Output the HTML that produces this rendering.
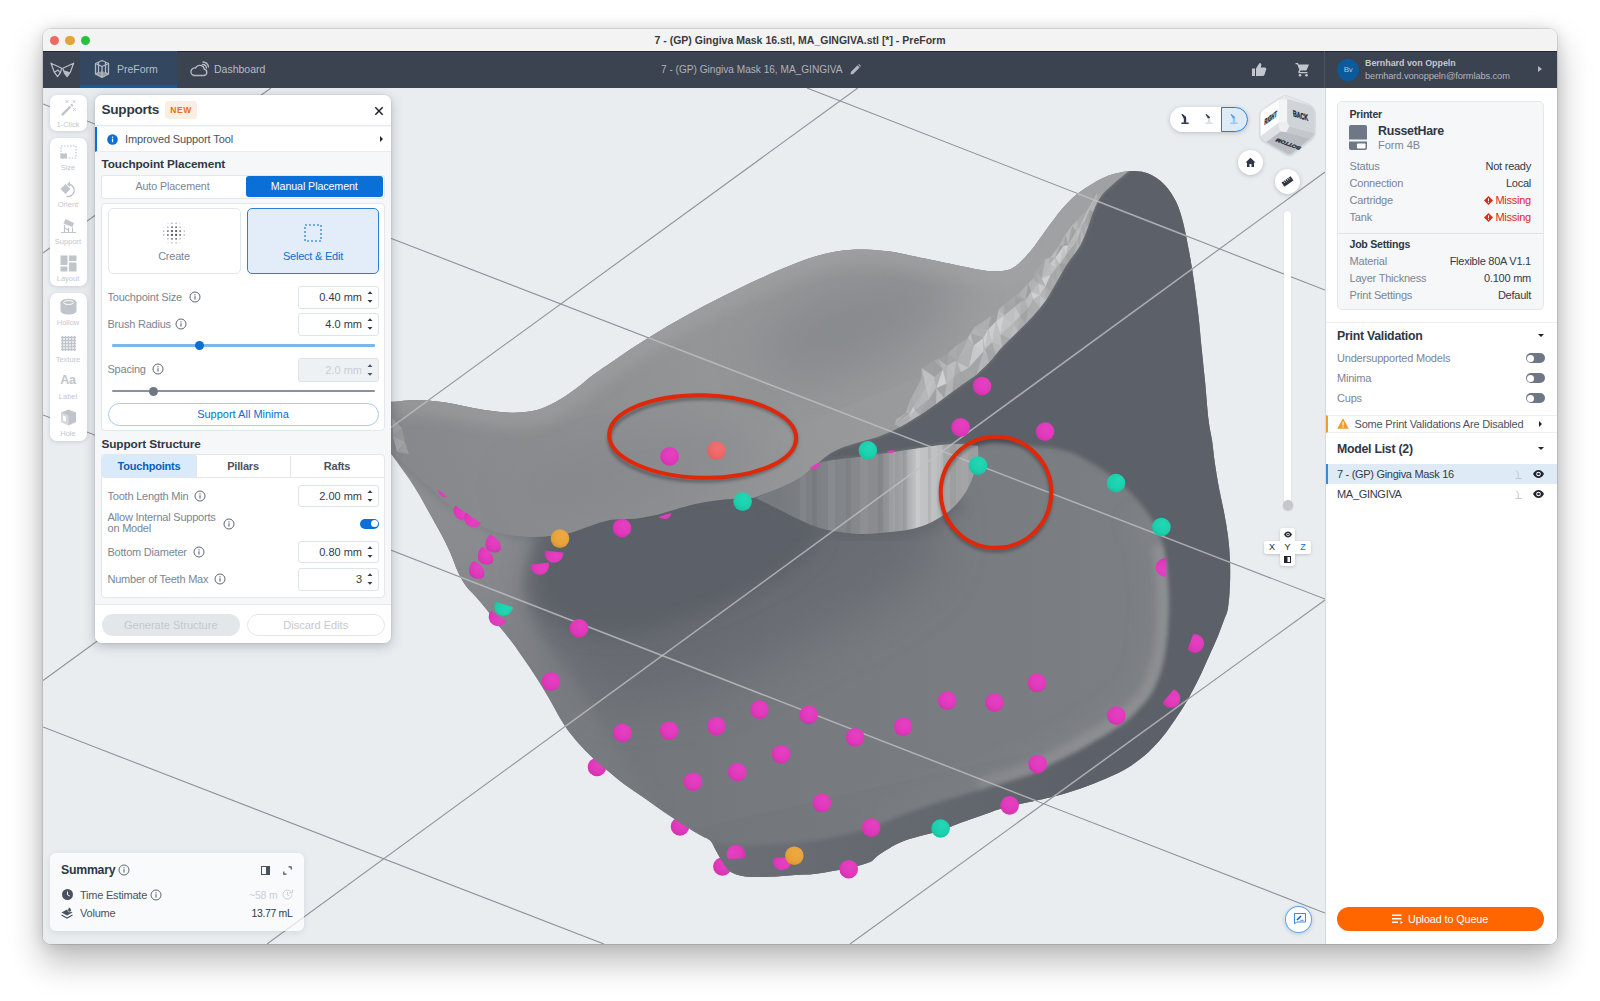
<!DOCTYPE html>
<html lang="en">
<head>
<meta charset="utf-8">
<title>PreForm</title>
<style>
*{box-sizing:border-box;margin:0;padding:0}
html,body{width:1600px;height:1001px;overflow:hidden;background:#fff}
body{font-family:"Liberation Sans",sans-serif;color:#333b49;position:relative;font-size:11px}
.abs{position:absolute}
#win{position:absolute;left:43px;top:29px;width:1514px;height:915px;border-radius:8px;overflow:hidden;background:#e9edf0}
#shadow{position:absolute;left:43px;top:29px;width:1514px;height:915px;border-radius:8px;
 box-shadow:0 0 0 1px rgba(0,0,0,.10),0 17px 32px 2px rgba(0,0,0,.25),0 0 15px rgba(0,0,0,.13)}
#titlebar{position:absolute;left:0;top:0;width:1514px;height:22px;background:#f3f3f4;text-align:center;font-weight:bold;font-size:10.500px;line-height:22px;color:#3a3a3c;letter-spacing:0}
.tl{position:absolute;top:6.500px;width:9.500px;height:9.500px;border-radius:50%}
#toolbar{position:absolute;left:0;top:22px;width:1514px;height:37px;background:#3b4250;box-shadow:inset 0 1px 0 #1f2838}
#viewport{position:absolute;left:0;top:59px;width:1282px;height:856px;background:#e9edf0;overflow:hidden}
#rpanel{position:absolute;left:1282px;top:59px;width:232px;height:856px;background:#fff;border-left:1px solid #d5dae0;overflow:hidden}
#toolbar .tab{position:absolute;top:0;height:37px;color:#b9bec7;font-size:11px;line-height:37px}
#toolbar svg{position:absolute}
.tbtxt{position:absolute;color:#b4b9c2;font-size:11px;white-space:nowrap}

#vp{position:absolute;left:-43px;top:-88px;width:1600px;height:1001px}
.tbox{position:absolute;left:49.500px;width:37px;background:#fff;border-radius:7px;box-shadow:0 1px 4px rgba(60,70,90,.18)}
.tl7{position:absolute;left:49.500px;width:37px;text-align:center;font-size:7.500px;color:#c3c8cf;line-height:9px}
#sp{position:absolute;left:95px;top:95px;width:296px;height:548px;background:#f5f7f9;border-radius:7px;box-shadow:0 3px 12px rgba(40,50,70,.28),0 0 2px rgba(40,50,70,.2);overflow:hidden}
.lab{font-size:11px;color:#7b8594;line-height:14px;white-space:nowrap;height:14px;letter-spacing:-.22px}
.inp{border:1px solid #dfe4e9;border-radius:3px}
.h12{position:absolute;font-weight:bold;font-size:11.800px;letter-spacing:-.1px;color:#2f3744;white-space:nowrap;line-height:14px}
.card{position:absolute;background:#fff;border:1px solid #e3e7eb;border-radius:4px}

#rp{position:absolute;left:-1326px;top:-88px;width:1600px;height:1001px}
.rl{position:absolute;left:1349.500px;font-size:11px;color:#7b8594;line-height:14px;white-space:nowrap;letter-spacing:-.2px}
.rv{position:absolute;right:69px;font-size:11px;color:#333b49;line-height:14px;white-space:nowrap;text-align:right;letter-spacing:-.25px}
.rh{position:absolute;letter-spacing:-.25px;font-weight:bold;color:#2f3744;white-space:nowrap;line-height:14px}
.tg{position:absolute;left:1525.500px;width:19px;height:10px;border-radius:5px;background:#6d7785}
.tg:after{content:"";position:absolute;left:1.500px;top:1.500px;width:7px;height:7px;border-radius:50%;background:#fff}

.cbtn{position:absolute;width:25px;height:25px;border-radius:50%;background:#fff;box-shadow:0 1px 4px rgba(40,50,70,.25)}

</style>
</head>
<body>
<div id="shadow"></div>
<div id="win">
 <div id="titlebar">7 - (GP) Gingiva Mask 16.stl, MA_GINGIVA.stl [*] - PreForm
  <div class="tl" style="left:6.500px;background:#ee6a5f"></div>
  <div class="tl" style="left:22px;background:#e6a23c"></div>
  <div class="tl" style="left:37.500px;background:#27c13f"></div>
 </div>
 <div id="toolbar">
  <svg style="left:7px;top:10px" width="25" height="18" viewBox="0 0 25 18"><g fill="none" stroke="#b9bdc4" stroke-width="1.250" stroke-linejoin="round"><path d="M1 2.200 L11.800 7.200 L10.200 12 L7.500 15.600 L4.300 11.200 Z"/><path d="M4.300 11.200 L8 9 L10.200 12"/><path d="M23.600 2.200 L12.800 7.200 L14.400 12 L17.100 15.600 L20.300 11.200 Z"/></g><path d="M13.600 9.200 L20 11.300 L17.100 15.600 L14.400 12 Z" fill="#b9bdc4"/></svg>
  <div class="tab" style="left:37px;width:97px;background:#334760;border-bottom:3px solid #0b5fa8"></div>
  <svg style="left:51px;top:8px" width="16" height="20" viewBox="0 0 16 20"><g fill="none" stroke="#b3b7be" stroke-width="1.3" stroke-linejoin="round"><path d="M8 1.500 L14.500 4.500 V15 L8 18.500 L1.500 15 V4.500 Z"/><path d="M1.500 4.500 L8 7.500 L14.500 4.500 M8 7.500 V18.500"/><path d="M4.500 3.200 V13.500 L1.500 15 M11.500 3.200 V13.500 L14.500 15"/></g><path d="M4.500 13.500 L8 12 L11.500 13.500 L14.500 15 L8 18.500 L1.500 15 Z" fill="#b3b7be" opacity=".75"/></svg>
  <div class="tbtxt" style="left:74px;top:0;line-height:37px;color:#b8bdc6;font-size:10.500px">PreForm</div>
  <svg style="left:146px;top:10px" width="20" height="16" viewBox="0 0 20 16"><g fill="none" stroke="#b3b7be" stroke-width="1.400" stroke-linecap="round" stroke-linejoin="round"><path d="M5 14.500 H15 A3.200 3.200 0 0 0 15.300 8.200 A4.600 4.600 0 0 0 6.600 7 A3.800 3.800 0 0 0 5 14.500 Z"/><path d="M13.500 3.500 A4 4 0 0 1 17.500 7"/><path d="M14 1 A6 6 0 0 1 19.500 6"/></g></svg>
  <div class="tbtxt" style="left:171px;top:0;line-height:37px;color:#b8bdc6;font-size:10.500px">Dashboard</div>
  <div class="tbtxt" style="left:618px;top:0;line-height:37px;font-size:10.100px;color:#aeb3bc">7 - (GP) Gingiva Mask 16, MA_GINGIVA</div>
  <svg style="left:807px;top:13px" width="11" height="11" viewBox="0 0 11 11"><path d="M0.500 10.500 L1 7.800 L7.500 1.300 L9.700 3.500 L3.200 10 Z M8.200 0.700 L9 0 L11 2 L10.300 2.800 Z" fill="#b3b7be"/></svg>
  <svg style="left:1208px;top:11px" width="16" height="15" viewBox="0 0 16 15"><path d="M1 6.500 H4 V14 H1 Z M5 14 V6.500 L8.500 1 C10 1 10.600 2 10.300 3.300 L9.700 5.500 H13.800 C15 5.500 15.500 6.500 15.200 7.500 L13.500 12.800 C13.200 13.600 12.600 14 11.800 14 Z" fill="#c2c6cd"/></svg>
  <svg style="left:1252px;top:11px" width="15" height="15" viewBox="0 0 15 15"><path d="M0.500 1 H3 L3.700 2.500 H14 L11.800 7.800 C11.600 8.300 11.200 8.500 10.700 8.500 H5.500 L4.800 10 H12.500 V11.300 H4.500 C3.500 11.300 3 10.300 3.400 9.500 L4.300 7.800 L2.200 2.300 H0.500 Z" fill="#c2c6cd"/><circle cx="5" cy="13.200" r="1.300" fill="#c2c6cd"/><circle cx="11.500" cy="13.200" r="1.300" fill="#c2c6cd"/></svg>
  <div class="abs" style="left:1281px;top:0;width:1px;height:37px;background:#4a5160"></div>
  <div class="abs" style="left:1294px;top:8px;width:22px;height:22px;border-radius:50%;background:#0b5a9c;color:#9fc3e4;font-size:8px;text-align:center;line-height:22px;letter-spacing:-.3px">Bv</div>
  <div class="tbtxt" style="left:1322px;top:7px;font-weight:bold;font-size:8.900px;color:#c3c7ce">Bernhard von Oppeln</div>
  <div class="tbtxt" style="left:1322px;top:20px;font-size:9.300px;color:#b0b5be;letter-spacing:-.1px">bernhard.vonoppeln@formlabs.com</div>
  <div class="abs" style="left:1495px;top:15px;width:0;height:0;border-left:4px solid #b3b7be;border-top:3.500px solid transparent;border-bottom:3.500px solid transparent"></div>
</div>
 <div id="viewport"><div id="vp">
<svg class="abs" style="left:0;top:0" width="1600" height="1001" viewBox="0 0 1600 1001">
<defs>
<clipPath id="silc"><path d="M380.0 401.0 C382.0 394.6 385.6 402.0 392.0 401.8 C398.4 401.6 409.3 399.8 418.5 400.0 C427.7 400.2 437.5 401.4 447.0 402.8 C456.5 404.2 465.9 406.9 475.4 408.5 C484.9 410.1 496.0 411.7 503.9 412.3 C511.8 412.9 516.5 412.9 522.8 412.3 C529.1 411.7 535.5 410.7 541.8 408.5 C548.1 406.3 554.5 402.8 560.8 399.0 C567.1 395.2 574.4 389.7 579.8 385.7 C585.2 381.7 587.6 378.9 593.0 375.0 C598.4 371.1 605.8 366.2 612.0 362.0 C618.2 357.8 623.8 353.6 630.0 349.5 C636.2 345.4 642.8 341.3 649.0 337.5 C655.2 333.7 660.9 330.1 667.0 326.5 C673.1 322.9 679.4 319.4 685.6 316.0 C691.8 312.6 697.8 309.2 704.0 306.0 C710.2 302.8 716.4 299.6 722.6 296.5 C728.8 293.4 734.9 290.4 741.0 287.5 C747.1 284.6 753.3 281.6 759.5 278.8 C765.7 276.0 771.8 273.1 778.0 270.5 C784.2 267.9 790.3 265.3 796.5 263.0 C802.7 260.7 808.8 258.3 815.0 256.5 C821.2 254.7 827.3 253.1 833.5 252.0 C839.7 250.9 845.9 250.2 852.0 249.8 C858.1 249.4 863.7 249.5 870.0 249.8 C876.3 250.1 883.3 250.7 890.0 251.6 C896.7 252.5 903.0 254.1 910.0 255.5 C917.0 256.9 924.0 258.4 932.0 260.0 C940.0 261.6 949.3 263.7 958.0 265.4 C966.7 267.1 976.7 269.5 984.0 270.4 C991.3 271.3 996.8 271.6 1002.0 271.0 C1007.2 270.4 1010.2 269.8 1015.0 266.5 C1019.8 263.2 1025.4 257.1 1030.6 251.0 C1035.8 244.9 1040.8 237.0 1046.0 230.0 C1051.2 223.0 1056.8 215.0 1062.0 209.0 C1067.2 203.0 1072.2 198.1 1077.4 193.8 C1082.6 189.5 1087.8 186.4 1093.0 183.4 C1098.2 180.4 1103.4 177.6 1108.6 175.6 C1113.8 173.6 1119.7 172.5 1124.0 171.7 C1128.3 170.9 1131.0 170.9 1134.5 171.0 C1138.0 171.1 1141.6 171.5 1145.0 172.5 C1148.4 173.5 1151.5 174.8 1155.0 177.0 C1158.5 179.2 1162.2 181.9 1165.7 186.0 C1169.2 190.1 1173.1 195.6 1176.0 201.6 C1178.9 207.6 1180.8 213.3 1183.0 222.0 C1185.2 230.7 1187.6 243.1 1189.5 253.5 C1191.4 263.9 1193.0 274.3 1194.5 284.7 C1196.0 295.1 1197.3 305.6 1198.5 316.0 C1199.7 326.4 1200.4 336.2 1201.5 347.0 C1202.6 357.8 1203.8 368.6 1205.0 380.8 C1206.2 393.0 1207.4 410.1 1208.6 420.0 C1209.8 429.9 1210.9 432.7 1212.0 440.0 C1213.1 447.3 1213.8 456.0 1215.0 464.0 C1216.2 472.0 1217.5 480.0 1219.0 488.0 C1220.5 496.0 1222.5 504.0 1224.0 512.0 C1225.5 520.0 1227.0 528.0 1228.0 536.0 C1229.0 544.0 1229.7 552.0 1230.0 560.0 C1230.3 568.0 1230.3 576.0 1230.0 584.0 C1229.7 592.0 1229.0 602.0 1228.0 608.0 C1227.0 614.0 1225.7 615.3 1224.0 620.0 C1222.3 624.7 1220.3 630.3 1218.0 636.0 C1215.7 641.7 1212.7 648.0 1210.0 654.0 C1207.3 660.0 1204.7 666.3 1202.0 672.0 C1199.3 677.7 1197.0 682.3 1194.0 688.0 C1191.0 693.7 1187.7 700.0 1184.0 706.0 C1180.3 712.0 1176.0 718.3 1172.0 724.0 C1168.0 729.7 1164.7 734.7 1160.0 740.0 C1155.3 745.3 1150.0 751.0 1144.0 756.0 C1138.0 761.0 1131.3 765.8 1124.0 770.0 C1116.7 774.2 1108.0 777.7 1100.0 781.0 C1092.0 784.3 1084.3 787.2 1076.0 790.0 C1067.7 792.8 1059.3 795.2 1050.0 797.5 C1040.7 799.8 1028.3 802.1 1020.0 804.0 C1011.7 805.9 1006.7 807.0 1000.0 809.0 C993.3 811.0 986.7 813.7 980.0 816.0 C973.3 818.3 966.7 820.5 960.0 823.0 C953.3 825.5 946.7 828.8 940.0 831.0 C933.3 833.2 926.7 834.1 920.0 836.0 C913.3 837.9 906.7 839.5 900.0 842.5 C893.3 845.5 885.0 850.8 880.0 854.0 C875.0 857.2 874.8 859.8 870.0 862.0 C865.2 864.2 857.2 866.0 851.0 867.5 C844.8 869.0 838.7 869.9 832.5 871.0 C826.3 872.1 820.0 873.3 813.8 874.0 C807.5 874.7 801.3 874.6 795.0 875.0 C788.7 875.4 782.2 876.2 776.0 876.5 C769.8 876.8 763.1 877.1 757.5 877.0 C751.9 876.9 746.9 876.8 742.5 876.0 C738.1 875.2 734.1 874.0 731.0 872.0 C727.9 870.0 726.3 867.4 723.8 863.8 C721.3 860.2 718.2 854.4 716.0 850.6 C713.8 846.8 713.1 843.5 710.6 841.0 C708.1 838.5 705.7 838.4 701.0 835.6 C696.3 832.8 688.7 828.3 682.5 824.4 C676.3 820.5 670.0 816.3 663.8 812.0 C657.5 807.7 651.3 802.9 645.0 798.5 C638.7 794.1 632.2 790.1 626.0 785.5 C619.8 780.9 613.3 775.4 608.0 771.0 C602.7 766.6 598.3 763.0 594.0 759.0 C589.7 755.0 586.0 751.3 582.0 747.0 C578.0 742.7 573.7 737.8 570.0 733.0 C566.3 728.2 563.3 723.5 560.0 718.0 C556.7 712.5 553.7 706.3 550.0 700.0 C546.3 693.7 542.0 686.3 538.0 680.0 C534.0 673.7 530.3 668.3 526.0 662.0 C521.7 655.7 516.5 648.0 512.0 642.0 C507.5 636.0 503.2 631.3 499.0 626.0 C494.8 620.7 490.7 614.7 487.0 610.0 C483.3 605.3 480.5 602.0 477.0 598.0 C473.5 594.0 469.2 590.3 466.0 586.0 C462.8 581.7 460.7 577.7 458.0 572.0 C455.3 566.3 453.0 558.7 450.0 552.0 C447.0 545.3 443.3 538.3 440.0 532.0 C436.7 525.7 433.3 520.0 430.0 514.0 C426.7 508.0 423.3 501.7 420.0 496.0 C416.7 490.3 413.3 485.0 410.0 480.0 C406.7 475.0 403.0 470.2 400.0 466.0 C397.0 461.8 395.3 459.3 392.0 455.0 C388.7 450.7 382.0 449.0 380.0 440.0 C378.0 431.0 378.0 407.4 380.0 401.0 Z"/></clipPath>
<clipPath id="surfc"><path d="M380 300 L1129 100 L1129 171C1126.5 173.1 1118.5 179.2 1113.8 183.4 C1109.1 187.6 1104.3 191.6 1100.8 196.4 C1097.3 201.2 1095.2 206.8 1093.0 212.0 C1090.8 217.2 1090.0 221.9 1087.8 227.5 C1085.6 233.1 1083.5 239.6 1080.0 245.7 C1076.5 251.8 1070.9 257.9 1067.0 264.0 C1063.1 270.1 1060.1 276.0 1056.6 282.0 C1053.1 288.0 1049.9 294.3 1046.0 300.0 C1042.1 305.7 1037.7 310.8 1033.0 316.0 C1028.3 321.2 1022.9 326.2 1017.7 331.4 C1012.5 336.6 1006.8 341.8 1002.0 347.0 C997.2 352.2 993.3 357.9 989.0 362.6 C984.7 367.3 979.5 372.0 976.0 375.0 C972.5 378.0 972.0 377.7 968.0 380.5 C964.0 383.3 957.3 388.1 952.0 392.0 C946.7 395.9 941.3 400.2 936.0 404.0 C930.7 407.8 926.0 411.2 920.0 415.0 C914.0 418.8 906.7 423.5 900.0 427.0 C893.3 430.5 886.7 433.5 880.0 436.0 C873.3 438.5 866.7 439.9 860.0 442.0 C853.3 444.1 845.3 446.3 840.0 448.5 C834.7 450.7 831.3 452.8 828.0 455.0 C824.7 457.2 822.7 459.3 820.0 461.5 C817.3 463.7 815.3 465.2 812.0 468.0 C808.7 470.8 805.3 474.7 800.0 478.0 C794.7 481.3 786.0 485.3 780.0 488.0 C774.0 490.7 768.7 492.3 764.0 494.0 C759.3 495.7 757.3 497.2 752.0 498.0 C746.7 498.8 737.3 498.7 732.0 499.0 C726.7 499.3 725.3 499.3 720.0 500.0 C714.7 500.7 706.7 501.7 700.0 503.0 C693.3 504.3 686.7 506.2 680.0 508.0 C673.3 509.8 666.7 512.3 660.0 514.0 C653.3 515.7 645.0 517.2 640.0 518.0 C635.0 518.8 635.0 518.7 630.0 519.0 C625.0 519.3 616.7 518.8 610.0 520.0 C603.3 521.2 596.7 523.8 590.0 526.0 C583.3 528.2 576.7 531.3 570.0 533.0 C563.3 534.7 556.7 535.3 550.0 536.0 C543.3 536.7 536.7 537.2 530.0 537.0 C523.3 536.8 516.7 536.2 510.0 535.0 C503.3 533.8 496.7 532.5 490.0 530.0 C483.3 527.5 476.7 524.0 470.0 520.0 C463.3 516.0 456.7 511.3 450.0 506.0 C443.3 500.7 436.7 494.0 430.0 488.0 C423.3 482.0 416.3 475.8 410.0 470.0 C403.7 464.2 397.0 457.7 392.0 453.0 C387.0 448.3 382.0 443.8 380.0 442.0 Z"/></clipPath>
<filter id="b2" x="-10%" y="-10%" width="120%" height="120%"><feGaussianBlur stdDeviation="2"/></filter>
<filter id="b3" x="-10%" y="-10%" width="120%" height="120%"><feGaussianBlur stdDeviation="3"/></filter>
<filter id="b6" x="-20%" y="-20%" width="140%" height="140%"><feGaussianBlur stdDeviation="6"/></filter>
<filter id="b10" x="-20%" y="-20%" width="140%" height="140%"><feGaussianBlur stdDeviation="10"/></filter>
<filter id="b25" x="-30%" y="-30%" width="160%" height="160%"><feGaussianBlur stdDeviation="25"/></filter>
<filter id="es" x="-10%" y="-10%" width="120%" height="130%"><feGaussianBlur stdDeviation="1.500"/></filter>
<radialGradient id="gM" cx=".6" cy=".35" r=".75"><stop offset="0" stop-color="#e640c2"/><stop offset=".6" stop-color="#e038ba"/><stop offset="1" stop-color="#cf2fac"/></radialGradient>
<radialGradient id="gT" cx=".6" cy=".35" r=".75"><stop offset="0" stop-color="#22d8b6"/><stop offset=".6" stop-color="#1ccfad"/><stop offset="1" stop-color="#14bd9d"/></radialGradient>
<radialGradient id="gO" cx=".6" cy=".35" r=".75"><stop offset="0" stop-color="#eeaa40"/><stop offset=".6" stop-color="#e8a23a"/><stop offset="1" stop-color="#d99030"/></radialGradient>
<radialGradient id="gS" cx=".6" cy=".35" r=".75"><stop offset="0" stop-color="#f27070"/><stop offset=".6" stop-color="#ec6868"/><stop offset="1" stop-color="#dd5c5c"/></radialGradient>
<linearGradient id="gsurf" x1="400" y1="500" x2="1050" y2="250" gradientUnits="userSpaceOnUse"><stop offset="0" stop-color="#85878a"/><stop offset=".45" stop-color="#929496"/><stop offset="1" stop-color="#a0a1a3"/></linearGradient>
<linearGradient id="gcyl" x1="780" y1="0" x2="980" y2="0" gradientUnits="userSpaceOnUse"><stop offset="0" stop-color="#777a7f"/><stop offset=".25" stop-color="#808387"/><stop offset=".5" stop-color="#8b8d90"/><stop offset=".62" stop-color="#a2a3a6"/><stop offset=".68" stop-color="#c2c3c5"/><stop offset=".78" stop-color="#bfc0c2"/><stop offset=".82" stop-color="#a6a7a9"/><stop offset="1" stop-color="#9a9c9e"/></linearGradient>
<linearGradient id="gfade" x1="700" y1="0" x2="1080" y2="0" gradientUnits="userSpaceOnUse"><stop offset="0" stop-color="#72767b" stop-opacity=".75"/><stop offset=".35" stop-color="#72767b" stop-opacity=".45"/><stop offset=".75" stop-color="#72767b" stop-opacity=".25"/><stop offset="1" stop-color="#72767b" stop-opacity="0"/></linearGradient>
<linearGradient id="gwall" x1="0" y1="450" x2="0" y2="800" gradientUnits="userSpaceOnUse"><stop offset="0" stop-color="#8e9093"/><stop offset=".4" stop-color="#86888c"/><stop offset=".7" stop-color="#7a7d82"/><stop offset="1" stop-color="#75787d"/></linearGradient>
<linearGradient id="gfloor" x1="600" y1="0" x2="1150" y2="0" gradientUnits="userSpaceOnUse"><stop offset="0" stop-color="#72767b"/><stop offset=".4" stop-color="#777a7f"/><stop offset="1" stop-color="#7b7e82"/></linearGradient>
</defs>
<g><line x1="43" y1="104" x2="1325" y2="599" stroke="#8f9398" stroke-width="1.1" opacity="1"/><line x1="43" y1="727" x2="604" y2="944" stroke="#8f9398" stroke-width="1.1" opacity="1"/><line x1="807" y1="88" x2="1325" y2="290" stroke="#8f9398" stroke-width="1.1" opacity="1"/><line x1="43" y1="415" x2="1325" y2="913" stroke="#8f9398" stroke-width="1.1" opacity="1"/><line x1="271" y1="88" x2="43" y2="253" stroke="#8f9398" stroke-width="1.1" opacity="1"/><line x1="857.8" y1="88" x2="43" y2="680.5" stroke="#8f9398" stroke-width="1.1" opacity="1"/><line x1="1325" y1="172" x2="267" y2="944" stroke="#8f9398" stroke-width="1.1" opacity="1"/><line x1="1325" y1="600" x2="850" y2="944" stroke="#8f9398" stroke-width="1.1" opacity="1"/></g>
<circle cx="597" cy="767" r="9.300" fill="url(#gM)"/><circle cx="680" cy="826.5" r="9.300" fill="url(#gM)"/><circle cx="722.4" cy="866.5" r="9.300" fill="url(#gM)"/>
<g clip-path="url(#silc)">
<rect x="380" y="150" width="880" height="760" fill="url(#gfloor)"/>
<path d="M380 435 L392 453 L430 488 L470 520 L510 535 L536 538 L528 560 L522 584 L528 610 L544 640 L564 665 L580 690 L596 715 L610 742 L630 770 L665 808 L640 830 L560 740 L470 620 L380 470 Z" fill="url(#gwall)" filter="url(#b6)"/>
<path d="M546 520 L534 562 L530 592 L540 625 L566 660 L612 700 L700 690 L790 650 L870 610 L930 570 L940 520 L880 480 L800 440 Z" fill="#5c6168" opacity=".5" filter="url(#b25)"/>
<path d="M548 520 L538 560 L534 590 L546 614 L584 634 L640 634 L700 616 L750 594 L790 572 L815 548 L822 530 L800 505 L760 480 L640 500 Z" fill="#5b6067" filter="url(#b10)"/>
<g filter="url(#b6)"><path d="M960.0 500.0 C958.0 502.0 952.7 508.3 948.0 512.0 C943.3 515.7 937.3 519.3 932.0 522.0 C926.7 524.7 921.3 526.5 916.0 528.0 C910.7 529.5 906.0 530.2 900.0 531.0 C894.0 531.8 886.7 532.5 880.0 533.0 C873.3 533.5 866.7 534.2 860.0 534.0 C853.3 533.8 846.7 533.0 840.0 532.0 C833.3 531.0 826.7 530.0 820.0 528.0 C813.3 526.0 806.7 523.0 800.0 520.0 C793.3 517.0 785.3 512.7 780.0 510.0 C774.7 507.3 770.0 505.0 768.0 504.0" fill="none" stroke="#5b6067" stroke-width="16" opacity=".55"/></g>
<g filter="url(#b10)"><path d="M1144.0 508.0 C1146.0 511.0 1152.8 520.0 1156.0 526.0 C1159.2 532.0 1161.3 538.3 1163.0 544.0 C1164.7 549.7 1165.2 554.0 1166.0 560.0 C1166.8 566.0 1167.5 573.3 1168.0 580.0 C1168.5 586.7 1168.9 593.3 1169.0 600.0 C1169.1 606.7 1168.8 613.3 1168.5 620.0 C1168.2 626.7 1167.8 633.3 1167.0 640.0 C1166.2 646.7 1165.5 653.3 1164.0 660.0 C1162.5 666.7 1160.3 674.0 1158.0 680.0 C1155.7 686.0 1153.0 691.3 1150.0 696.0 C1147.0 700.7 1143.7 704.0 1140.0 708.0 C1136.3 712.0 1132.7 716.2 1128.0 720.0 C1123.3 723.8 1117.3 727.6 1112.0 731.0 C1106.7 734.4 1102.0 737.0 1096.0 740.5 C1090.0 744.0 1082.7 748.4 1076.0 752.0 C1069.3 755.6 1062.7 758.7 1056.0 762.0 C1049.3 765.3 1042.0 769.3 1036.0 772.0 C1030.0 774.7 1029.3 775.0 1020.0 778.0 C1010.7 781.0 993.3 786.0 980.0 790.0 C966.7 794.0 953.3 797.7 940.0 802.0 C926.7 806.3 911.7 811.7 900.0 816.0 C888.3 820.3 875.0 826.0 870.0 828.0" fill="none" stroke="#96989b" stroke-width="46" opacity=".14"/></g>
<g filter="url(#b3)"><path d="M1163.0 544.0 C1163.5 546.7 1165.2 554.0 1166.0 560.0 C1166.8 566.0 1167.5 573.3 1168.0 580.0 C1168.5 586.7 1168.9 593.3 1169.0 600.0 C1169.1 606.7 1168.8 613.3 1168.5 620.0 C1168.2 626.7 1167.8 633.3 1167.0 640.0 C1166.2 646.7 1165.5 653.3 1164.0 660.0 C1162.5 666.7 1160.3 674.0 1158.0 680.0 C1155.7 686.0 1153.0 691.3 1150.0 696.0 C1147.0 700.7 1143.7 704.0 1140.0 708.0 C1136.3 712.0 1132.7 716.2 1128.0 720.0 C1123.3 723.8 1117.3 727.6 1112.0 731.0 C1106.7 734.4 1102.0 737.0 1096.0 740.5 C1090.0 744.0 1082.7 748.4 1076.0 752.0 C1069.3 755.6 1062.7 758.7 1056.0 762.0 C1049.3 765.3 1042.0 769.3 1036.0 772.0 C1030.0 774.7 1029.3 775.0 1020.0 778.0 C1010.7 781.0 986.7 788.0 980.0 790.0" fill="none" stroke="#9a9c9e" stroke-width="24" opacity=".5"/></g>
<path d="M1129.0 171.0 C1126.5 173.1 1118.5 179.2 1113.8 183.4 C1109.1 187.6 1104.3 191.6 1100.8 196.4 C1097.3 201.2 1095.2 206.8 1093.0 212.0 C1090.8 217.2 1090.0 221.9 1087.8 227.5 C1085.6 233.1 1083.5 239.6 1080.0 245.7 C1076.5 251.8 1070.9 257.9 1067.0 264.0 C1063.1 270.1 1060.1 276.0 1056.6 282.0 C1053.1 288.0 1049.9 294.3 1046.0 300.0 C1042.1 305.7 1037.7 310.8 1033.0 316.0 C1028.3 321.2 1022.9 326.2 1017.7 331.4 C1012.5 336.6 1006.8 341.8 1002.0 347.0 C997.2 352.2 993.3 357.9 989.0 362.6 C984.7 367.3 979.5 372.0 976.0 375.0 C972.5 378.0 972.0 377.7 968.0 380.5 C964.0 383.3 957.3 388.1 952.0 392.0 C946.7 395.9 941.3 400.2 936.0 404.0 C930.7 407.8 926.0 411.2 920.0 415.0 C914.0 418.8 906.7 423.5 900.0 427.0 C893.3 430.5 886.7 433.5 880.0 436.0 C873.3 438.5 866.7 439.9 860.0 442.0 C853.3 444.1 845.3 446.3 840.0 448.5 C834.7 450.7 831.3 452.8 828.0 455.0 C824.7 457.2 818.0 460.8 820.0 461.5 C822.0 462.2 833.3 459.8 840.0 459.0 C846.7 458.2 853.3 457.8 860.0 457.0 C866.7 456.2 873.3 455.0 880.0 454.0 C886.7 453.0 893.3 452.0 900.0 451.0 C906.7 450.0 913.3 449.0 920.0 448.0 C926.7 447.0 933.3 445.7 940.0 445.0 C946.7 444.3 953.7 443.8 960.0 444.0 C966.3 444.2 973.3 446.0 978.0 446.0 C982.7 446.0 984.3 444.3 988.0 444.0 C991.7 443.7 994.7 443.8 1000.0 444.0 C1005.3 444.2 1013.3 444.5 1020.0 445.0 C1026.7 445.5 1035.0 446.6 1040.0 447.0 C1045.0 447.4 1045.0 446.7 1050.0 447.5 C1055.0 448.3 1063.3 449.6 1070.0 452.0 C1076.7 454.4 1083.3 458.2 1090.0 462.0 C1096.7 465.8 1103.3 470.0 1110.0 475.0 C1116.7 480.0 1124.3 486.5 1130.0 492.0 C1135.7 497.5 1139.7 502.3 1144.0 508.0 C1148.3 513.7 1152.8 520.0 1156.0 526.0 C1159.2 532.0 1161.3 538.3 1163.0 544.0 C1164.7 549.7 1165.2 554.0 1166.0 560.0 C1166.8 566.0 1167.5 573.3 1168.0 580.0 C1168.5 586.7 1168.9 593.3 1169.0 600.0 C1169.1 606.7 1168.8 613.3 1168.5 620.0 C1168.2 626.7 1167.8 633.3 1167.0 640.0 C1166.2 646.7 1165.5 653.3 1164.0 660.0 C1162.5 666.7 1160.3 674.0 1158.0 680.0 C1155.7 686.0 1153.0 691.3 1150.0 696.0 C1147.0 700.7 1143.7 704.0 1140.0 708.0 C1136.3 712.0 1132.7 716.2 1128.0 720.0 C1123.3 723.8 1117.3 727.6 1112.0 731.0 C1106.7 734.4 1102.0 737.0 1096.0 740.5 C1090.0 744.0 1082.7 748.4 1076.0 752.0 C1069.3 755.6 1062.7 758.7 1056.0 762.0 C1049.3 765.3 1042.0 769.3 1036.0 772.0 C1030.0 774.7 1029.3 775.0 1020.0 778.0 C1010.7 781.0 993.3 786.0 980.0 790.0 C966.7 794.0 953.3 797.7 940.0 802.0 C926.7 806.3 911.7 811.7 900.0 816.0 C888.3 820.3 880.0 824.7 870.0 828.0 C860.0 831.3 849.3 833.8 840.0 836.0 C830.7 838.2 822.3 839.8 814.0 841.0 C805.7 842.2 799.4 842.8 790.0 843.5 C780.6 844.2 766.8 845.1 757.6 845.5 C748.4 845.9 742.6 846.6 735.0 846.0 C727.4 845.4 715.8 842.7 712.0 842.0 L700 846 L715 885 L725 900 L1300 900 L1300 100 L1129 100 Z" fill="#5b6068" filter="url(#b2)"/>
<path d="M690 830 L1080 740 L1080 900 L690 900 Z" fill="url(#gfade)"/>
<path d="M380 300 L1129 100 L1129 171C1126.5 173.1 1118.5 179.2 1113.8 183.4 C1109.1 187.6 1104.3 191.6 1100.8 196.4 C1097.3 201.2 1095.2 206.8 1093.0 212.0 C1090.8 217.2 1090.0 221.9 1087.8 227.5 C1085.6 233.1 1083.5 239.6 1080.0 245.7 C1076.5 251.8 1070.9 257.9 1067.0 264.0 C1063.1 270.1 1060.1 276.0 1056.6 282.0 C1053.1 288.0 1049.9 294.3 1046.0 300.0 C1042.1 305.7 1037.7 310.8 1033.0 316.0 C1028.3 321.2 1022.9 326.2 1017.7 331.4 C1012.5 336.6 1006.8 341.8 1002.0 347.0 C997.2 352.2 993.3 357.9 989.0 362.6 C984.7 367.3 979.5 372.0 976.0 375.0 C972.5 378.0 972.0 377.7 968.0 380.5 C964.0 383.3 957.3 388.1 952.0 392.0 C946.7 395.9 941.3 400.2 936.0 404.0 C930.7 407.8 926.0 411.2 920.0 415.0 C914.0 418.8 906.7 423.5 900.0 427.0 C893.3 430.5 886.7 433.5 880.0 436.0 C873.3 438.5 866.7 439.9 860.0 442.0 C853.3 444.1 845.3 446.3 840.0 448.5 C834.7 450.7 831.3 452.8 828.0 455.0 C824.7 457.2 822.7 459.3 820.0 461.5 C817.3 463.7 815.3 465.2 812.0 468.0 C808.7 470.8 805.3 474.7 800.0 478.0 C794.7 481.3 786.0 485.3 780.0 488.0 C774.0 490.7 768.7 492.3 764.0 494.0 C759.3 495.7 757.3 497.2 752.0 498.0 C746.7 498.8 737.3 498.7 732.0 499.0 C726.7 499.3 725.3 499.3 720.0 500.0 C714.7 500.7 706.7 501.7 700.0 503.0 C693.3 504.3 686.7 506.2 680.0 508.0 C673.3 509.8 666.7 512.3 660.0 514.0 C653.3 515.7 645.0 517.2 640.0 518.0 C635.0 518.8 635.0 518.7 630.0 519.0 C625.0 519.3 616.7 518.8 610.0 520.0 C603.3 521.2 596.7 523.8 590.0 526.0 C583.3 528.2 576.7 531.3 570.0 533.0 C563.3 534.7 556.7 535.3 550.0 536.0 C543.3 536.7 536.7 537.2 530.0 537.0 C523.3 536.8 516.7 536.2 510.0 535.0 C503.3 533.8 496.7 532.5 490.0 530.0 C483.3 527.5 476.7 524.0 470.0 520.0 C463.3 516.0 456.7 511.3 450.0 506.0 C443.3 500.7 436.7 494.0 430.0 488.0 C423.3 482.0 416.3 475.8 410.0 470.0 C403.7 464.2 397.0 457.7 392.0 453.0 C387.0 448.3 382.0 443.8 380.0 442.0 Z" fill="url(#gsurf)"/>
<g clip-path="url(#surfc)"><ellipse cx="858" cy="322" rx="105" ry="46" transform="rotate(-22 858 322)" fill="#787b7f" opacity=".48" filter="url(#b25)"/><ellipse cx="640" cy="470" rx="120" ry="40" transform="rotate(-12 640 470)" fill="#7e8084" opacity=".35" filter="url(#b25)"/><g filter="url(#b6)"><path d="M392.0 401.8 C396.4 401.5 409.3 399.8 418.5 400.0 C427.7 400.2 437.5 401.4 447.0 402.8 C456.5 404.2 465.9 406.9 475.4 408.5 C484.9 410.1 496.0 411.7 503.9 412.3 C511.8 412.9 516.5 412.9 522.8 412.3 C529.1 411.7 535.5 410.7 541.8 408.5 C548.1 406.3 554.5 402.8 560.8 399.0 C567.1 395.2 574.4 389.7 579.8 385.7 C585.2 381.7 587.6 378.9 593.0 375.0 C598.4 371.1 605.8 366.2 612.0 362.0 C618.2 357.8 623.8 353.6 630.0 349.5 C636.2 345.4 642.8 341.3 649.0 337.5 C655.2 333.7 660.9 330.1 667.0 326.5 C673.1 322.9 679.4 319.4 685.6 316.0 C691.8 312.6 697.8 309.2 704.0 306.0 C710.2 302.8 716.4 299.6 722.6 296.5 C728.8 293.4 734.9 290.4 741.0 287.5 C747.1 284.6 753.3 281.6 759.5 278.8 C765.7 276.0 771.8 273.1 778.0 270.5 C784.2 267.9 790.3 265.3 796.5 263.0 C802.7 260.7 808.8 258.3 815.0 256.5 C821.2 254.7 827.3 253.1 833.5 252.0 C839.7 250.9 845.9 250.2 852.0 249.8 C858.1 249.4 863.7 249.5 870.0 249.8 C876.3 250.1 883.3 250.7 890.0 251.6 C896.7 252.5 903.0 254.1 910.0 255.5 C917.0 256.9 924.0 258.4 932.0 260.0 C940.0 261.6 949.3 263.7 958.0 265.4 C966.7 267.1 976.7 269.5 984.0 270.4 C991.3 271.3 996.8 271.6 1002.0 271.0 C1007.2 270.4 1010.2 269.8 1015.0 266.5 C1019.8 263.2 1028.0 253.6 1030.6 251.0" fill="none" stroke="#a3a4a6" stroke-width="30" opacity=".5"/></g></g>
<g clip-path="url(#surfc)" opacity=".7"><path d="M392 418 L402 428 L393 436 Z" fill="#a9aaac"/><path d="M393 436 L402 428 L405 442 Z" fill="#9fa0a2"/><path d="M393 436 L405 442 L397 452 Z" fill="#b0b1b3"/><path d="M405 442 L409 454 L397 452 Z" fill="#a3a4a6"/></g>
<clipPath id="cylc"><path d="M820.0 462.5 C823.3 461.9 833.3 459.9 840.0 459.0 C846.7 458.1 853.3 457.8 860.0 457.0 C866.7 456.2 873.3 455.0 880.0 454.0 C886.7 453.0 893.3 452.0 900.0 451.0 C906.7 450.0 913.3 449.0 920.0 448.0 C926.7 447.0 933.3 445.7 940.0 445.0 C946.7 444.3 953.7 443.8 960.0 444.0 C966.3 444.2 975.0 445.7 978.0 446.0C978.0 448.3 978.7 455.3 978.0 460.0 C977.3 464.7 975.7 469.3 974.0 474.0 C972.3 478.7 970.3 483.7 968.0 488.0 C965.7 492.3 963.3 496.0 960.0 500.0 C956.7 504.0 952.7 508.3 948.0 512.0 C943.3 515.7 937.3 519.3 932.0 522.0 C926.7 524.7 921.3 526.5 916.0 528.0 C910.7 529.5 906.0 530.2 900.0 531.0 C894.0 531.8 886.7 532.5 880.0 533.0 C873.3 533.5 866.7 534.2 860.0 534.0 C853.3 533.8 846.7 533.0 840.0 532.0 C833.3 531.0 826.7 530.0 820.0 528.0 C813.3 526.0 806.7 523.0 800.0 520.0 C793.3 517.0 785.3 512.7 780.0 510.0 C774.7 507.3 772.0 506.0 768.0 504.0 C764.0 502.0 758.0 499.0 756.0 498.0 L764 494C766.7 493.0 774.0 490.7 780.0 488.0 C786.0 485.3 794.7 481.3 800.0 478.0 C805.3 474.7 808.7 470.6 812.0 468.0 C815.3 465.4 818.7 463.4 820.0 462.5 Z"/></clipPath><path d="M820.0 462.5 C823.3 461.9 833.3 459.9 840.0 459.0 C846.7 458.1 853.3 457.8 860.0 457.0 C866.7 456.2 873.3 455.0 880.0 454.0 C886.7 453.0 893.3 452.0 900.0 451.0 C906.7 450.0 913.3 449.0 920.0 448.0 C926.7 447.0 933.3 445.7 940.0 445.0 C946.7 444.3 953.7 443.8 960.0 444.0 C966.3 444.2 975.0 445.7 978.0 446.0C978.0 448.3 978.7 455.3 978.0 460.0 C977.3 464.7 975.7 469.3 974.0 474.0 C972.3 478.7 970.3 483.7 968.0 488.0 C965.7 492.3 963.3 496.0 960.0 500.0 C956.7 504.0 952.7 508.3 948.0 512.0 C943.3 515.7 937.3 519.3 932.0 522.0 C926.7 524.7 921.3 526.5 916.0 528.0 C910.7 529.5 906.0 530.2 900.0 531.0 C894.0 531.8 886.7 532.5 880.0 533.0 C873.3 533.5 866.7 534.2 860.0 534.0 C853.3 533.8 846.7 533.0 840.0 532.0 C833.3 531.0 826.7 530.0 820.0 528.0 C813.3 526.0 806.7 523.0 800.0 520.0 C793.3 517.0 785.3 512.7 780.0 510.0 C774.7 507.3 772.0 506.0 768.0 504.0 C764.0 502.0 758.0 499.0 756.0 498.0 L764 494C766.7 493.0 774.0 490.7 780.0 488.0 C786.0 485.3 794.7 481.3 800.0 478.0 C805.3 474.7 808.7 470.6 812.0 468.0 C815.3 465.4 818.7 463.4 820.0 462.5 Z" fill="url(#gcyl)"/>
<g clip-path="url(#cylc)"><rect x="800" y="430" width="6" height="120" fill="#fff" opacity="0.05"/><rect x="812" y="430" width="5" height="120" fill="#000" opacity="0.04"/><rect x="828" y="430" width="7" height="120" fill="#fff" opacity="0.06"/><rect x="846" y="430" width="5" height="120" fill="#000" opacity="0.04"/><rect x="860" y="430" width="8" height="120" fill="#fff" opacity="0.05"/><rect x="878" y="430" width="5" height="120" fill="#000" opacity="0.05"/><rect x="889" y="430" width="6" height="120" fill="#fff" opacity="0.07"/><rect x="903" y="430" width="4" height="120" fill="#000" opacity="0.05"/><rect x="916" y="430" width="4" height="120" fill="#fff" opacity="0.12"/><rect x="928" y="430" width="3" height="120" fill="#000" opacity="0.06"/><rect x="939" y="430" width="4" height="120" fill="#fff" opacity="0.1"/><rect x="950" y="430" width="6" height="120" fill="#000" opacity="0.04"/><rect x="962" y="430" width="6" height="120" fill="#fff" opacity="0.05"/></g>
<g clip-path="url(#surfc)"><path d="M1100.8 196.4 L1093.0 212.0 L1097.9 195.8 Z" fill="#a5a6a8" stroke="#a5a6a8" stroke-width=".5"/><path d="M1093.0 212.0 L1089.3 209.8 L1097.9 195.8 Z" fill="#b3b4b6" stroke="#b3b4b6" stroke-width=".5"/><path d="M1093.0 212.0 L1087.8 227.5 L1089.3 209.8 Z" fill="#9e9fa1" stroke="#9e9fa1" stroke-width=".5"/><path d="M1087.8 227.5 L1083.9 221.9 L1089.3 209.8 Z" fill="#a6a7a9" stroke="#a6a7a9" stroke-width=".5"/><path d="M1087.8 227.5 L1083.9 236.6 L1083.9 221.9 Z" fill="#afb0b2" stroke="#afb0b2" stroke-width=".5"/><path d="M1083.9 236.6 L1080.6 229.8 L1083.9 221.9 Z" fill="#aaabad" stroke="#aaabad" stroke-width=".5"/><path d="M1083.9 236.6 L1080.0 245.7 L1080.6 229.8 Z" fill="#b8b9bb" stroke="#b8b9bb" stroke-width=".5"/><path d="M1080.0 245.7 L1076.6 241.0 L1080.6 229.8 Z" fill="#a6a7a9" stroke="#a6a7a9" stroke-width=".5"/><path d="M1080.0 245.7 L1073.5 254.8 L1076.6 241.0 Z" fill="#b1b2b4" stroke="#b1b2b4" stroke-width=".5"/><path d="M1073.5 254.8 L1065.5 255.6 L1076.6 241.0 Z" fill="#a4a5a7" stroke="#a4a5a7" stroke-width=".5"/><path d="M1073.5 254.8 L1067.0 264.0 L1065.5 255.6 Z" fill="#a3a4a6" stroke="#a3a4a6" stroke-width=".5"/><path d="M1067.0 264.0 L1059.5 263.8 L1065.5 255.6 Z" fill="#a9aaac" stroke="#a9aaac" stroke-width=".5"/><path d="M1067.0 264.0 L1061.8 273.0 L1059.5 263.8 Z" fill="#9e9fa1" stroke="#9e9fa1" stroke-width=".5"/><path d="M1061.8 273.0 L1055.5 268.8 L1059.5 263.8 Z" fill="#a8a9ab" stroke="#a8a9ab" stroke-width=".5"/><path d="M1061.8 273.0 L1056.6 282.0 L1055.5 268.8 Z" fill="#acadaf" stroke="#acadaf" stroke-width=".5"/><path d="M1056.6 282.0 L1050.0 275.6 L1055.5 268.8 Z" fill="#a5a6a8" stroke="#a5a6a8" stroke-width=".5"/><path d="M1056.6 282.0 L1051.3 291.0 L1050.0 275.6 Z" fill="#aaabad" stroke="#aaabad" stroke-width=".5"/><path d="M1051.3 291.0 L1045.2 286.4 L1050.0 275.6 Z" fill="#a5a6a8" stroke="#a5a6a8" stroke-width=".5"/><path d="M1051.3 291.0 L1046.0 300.0 L1045.2 286.4 Z" fill="#acadaf" stroke="#acadaf" stroke-width=".5"/><path d="M1046.0 300.0 L1039.3 295.2 L1045.2 286.4 Z" fill="#b4b5b7" stroke="#b4b5b7" stroke-width=".5"/><path d="M1046.0 300.0 L1039.5 308.0 L1039.3 295.2 Z" fill="#c0c1c3" stroke="#c0c1c3" stroke-width=".5"/><path d="M1039.5 308.0 L1033.0 299.2 L1039.3 295.2 Z" fill="#b8b9bb" stroke="#b8b9bb" stroke-width=".5"/><path d="M1039.5 308.0 L1033.0 316.0 L1033.0 299.2 Z" fill="#acadaf" stroke="#acadaf" stroke-width=".5"/><path d="M1033.0 316.0 L1027.9 308.4 L1033.0 299.2 Z" fill="#abacae" stroke="#abacae" stroke-width=".5"/><path d="M1033.0 316.0 L1025.3 323.7 L1027.9 308.4 Z" fill="#adaeb0" stroke="#adaeb0" stroke-width=".5"/><path d="M1025.3 323.7 L1019.9 315.7 L1027.9 308.4 Z" fill="#a2a3a5" stroke="#a2a3a5" stroke-width=".5"/><path d="M1025.3 323.7 L1017.7 331.4 L1019.9 315.7 Z" fill="#abacae" stroke="#abacae" stroke-width=".5"/><path d="M1017.7 331.4 L1013.2 323.3 L1019.9 315.7 Z" fill="#b1b2b4" stroke="#b1b2b4" stroke-width=".5"/><path d="M1017.7 331.4 L1009.9 339.2 L1013.2 323.3 Z" fill="#bbbcbe" stroke="#bbbcbe" stroke-width=".5"/><path d="M1009.9 339.2 L1000.3 334.6 L1013.2 323.3 Z" fill="#b5b6b8" stroke="#b5b6b8" stroke-width=".5"/><path d="M1009.9 339.2 L1002.0 347.0 L1000.3 334.6 Z" fill="#a8a9ab" stroke="#a8a9ab" stroke-width=".5"/><path d="M1002.0 347.0 L991.9 342.4 L1000.3 334.6 Z" fill="#bcbdbf" stroke="#bcbdbf" stroke-width=".5"/><path d="M1002.0 347.0 L995.5 354.8 L991.9 342.4 Z" fill="#b6b7b9" stroke="#b6b7b9" stroke-width=".5"/><path d="M995.5 354.8 L984.8 348.7 L991.9 342.4 Z" fill="#a7a8aa" stroke="#a7a8aa" stroke-width=".5"/><path d="M995.5 354.8 L989.0 362.6 L984.8 348.7 Z" fill="#a4a5a7" stroke="#a4a5a7" stroke-width=".5"/><path d="M989.0 362.6 L983.1 351.7 L984.8 348.7 Z" fill="#babbbd" stroke="#babbbd" stroke-width=".5"/><path d="M989.0 362.6 L976.0 375.0 L983.1 351.7 Z" fill="#b4b5b7" stroke="#b4b5b7" stroke-width=".5"/><path d="M976.0 375.0 L968.4 367.7 L983.1 351.7 Z" fill="#a3a4a6" stroke="#a3a4a6" stroke-width=".5"/><path d="M976.0 375.0 L968.0 380.5 L968.4 367.7 Z" fill="#a5a6a8" stroke="#a5a6a8" stroke-width=".5"/><path d="M968.0 380.5 L960.5 372.0 L968.4 367.7 Z" fill="#a5a6a8" stroke="#a5a6a8" stroke-width=".5"/><path d="M968.0 380.5 L960.0 386.2 L960.5 372.0 Z" fill="#a3a4a6" stroke="#a3a4a6" stroke-width=".5"/><path d="M960.0 386.2 L953.7 376.7 L960.5 372.0 Z" fill="#a4a5a7" stroke="#a4a5a7" stroke-width=".5"/><path d="M960.0 386.2 L952.0 392.0 L953.7 376.7 Z" fill="#a2a3a5" stroke="#a2a3a5" stroke-width=".5"/><path d="M952.0 392.0 L946.2 383.6 L953.7 376.7 Z" fill="#b3b4b6" stroke="#b3b4b6" stroke-width=".5"/><path d="M952.0 392.0 L944.0 398.0 L946.2 383.6 Z" fill="#b3b4b6" stroke="#b3b4b6" stroke-width=".5"/><path d="M944.0 398.0 L936.0 388.0 L946.2 383.6 Z" fill="#a1a2a4" stroke="#a1a2a4" stroke-width=".5"/><path d="M944.0 398.0 L936.0 404.0 L936.0 388.0 Z" fill="#bcbdbf" stroke="#bcbdbf" stroke-width=".5"/><path d="M936.0 404.0 L928.6 399.3 L936.0 388.0 Z" fill="#a1a2a4" stroke="#a1a2a4" stroke-width=".5"/><path d="M936.0 404.0 L920.0 415.0 L928.6 399.3 Z" fill="#a3a4a6" stroke="#a3a4a6" stroke-width=".5"/><path d="M920.0 415.0 L914.6 410.2 L928.6 399.3 Z" fill="#a8a9ab" stroke="#a8a9ab" stroke-width=".5"/><path d="M920.0 415.0 L910.0 421.0 L914.6 410.2 Z" fill="#b8b9bb" stroke="#b8b9bb" stroke-width=".5"/><path d="M910.0 421.0 L909.4 416.6 L914.6 410.2 Z" fill="#babbbd" stroke="#babbbd" stroke-width=".5"/><path d="M910.0 421.0 L900.0 427.0 L909.4 416.6 Z" fill="#afb0b2" stroke="#afb0b2" stroke-width=".5"/><path d="M900.0 427.0 L895.2 424.3 L909.4 416.6 Z" fill="#abacae" stroke="#abacae" stroke-width=".5"/><path d="M1097.9 195.8 L1089.3 209.8 L1096.4 193.2 Z" fill="#b0b1b3" stroke="#b0b1b3" stroke-width=".5"/><path d="M1089.3 209.8 L1088.5 207.9 L1096.4 193.2 Z" fill="#bdbec0" stroke="#bdbec0" stroke-width=".5"/><path d="M1089.3 209.8 L1083.9 221.9 L1088.5 207.9 Z" fill="#bcbdbf" stroke="#bcbdbf" stroke-width=".5"/><path d="M1083.9 221.9 L1078.5 227.8 L1088.5 207.9 Z" fill="#c1c2c4" stroke="#c1c2c4" stroke-width=".5"/><path d="M1083.9 221.9 L1080.6 229.8 L1078.5 227.8 Z" fill="#b4b5b7" stroke="#b4b5b7" stroke-width=".5"/><path d="M1080.6 229.8 L1076.0 231.0 L1078.5 227.8 Z" fill="#bbbcbe" stroke="#bbbcbe" stroke-width=".5"/><path d="M1080.6 229.8 L1076.6 241.0 L1076.0 231.0 Z" fill="#bdbec0" stroke="#bdbec0" stroke-width=".5"/><path d="M1076.6 241.0 L1067.9 244.9 L1076.0 231.0 Z" fill="#b7b8ba" stroke="#b7b8ba" stroke-width=".5"/><path d="M1076.6 241.0 L1065.5 255.6 L1067.9 244.9 Z" fill="#b8b9bb" stroke="#b8b9bb" stroke-width=".5"/><path d="M1065.5 255.6 L1063.5 245.6 L1067.9 244.9 Z" fill="#d0d1d3" stroke="#d0d1d3" stroke-width=".5"/><path d="M1065.5 255.6 L1059.5 263.8 L1063.5 245.6 Z" fill="#c2c3c5" stroke="#c2c3c5" stroke-width=".5"/><path d="M1059.5 263.8 L1054.9 257.6 L1063.5 245.6 Z" fill="#cfd0d2" stroke="#cfd0d2" stroke-width=".5"/><path d="M1059.5 263.8 L1055.5 268.8 L1054.9 257.6 Z" fill="#b9babc" stroke="#b9babc" stroke-width=".5"/><path d="M1055.5 268.8 L1049.7 263.6 L1054.9 257.6 Z" fill="#c8c9cb" stroke="#c8c9cb" stroke-width=".5"/><path d="M1055.5 268.8 L1050.0 275.6 L1049.7 263.6 Z" fill="#bdbec0" stroke="#bdbec0" stroke-width=".5"/><path d="M1050.0 275.6 L1041.4 278.3 L1049.7 263.6 Z" fill="#bbbcbe" stroke="#bbbcbe" stroke-width=".5"/><path d="M1050.0 275.6 L1045.2 286.4 L1041.4 278.3 Z" fill="#cfd0d2" stroke="#cfd0d2" stroke-width=".5"/><path d="M1045.2 286.4 L1038.0 283.5 L1041.4 278.3 Z" fill="#b2b3b5" stroke="#b2b3b5" stroke-width=".5"/><path d="M1045.2 286.4 L1039.3 295.2 L1038.0 283.5 Z" fill="#c9cacc" stroke="#c9cacc" stroke-width=".5"/><path d="M1039.3 295.2 L1030.8 292.1 L1038.0 283.5 Z" fill="#bdbec0" stroke="#bdbec0" stroke-width=".5"/><path d="M1039.3 295.2 L1033.0 299.2 L1030.8 292.1 Z" fill="#d0d1d3" stroke="#d0d1d3" stroke-width=".5"/><path d="M1033.0 299.2 L1025.0 300.3 L1030.8 292.1 Z" fill="#bcbdbf" stroke="#bcbdbf" stroke-width=".5"/><path d="M1033.0 299.2 L1027.9 308.4 L1025.0 300.3 Z" fill="#bcbdbf" stroke="#bcbdbf" stroke-width=".5"/><path d="M1027.9 308.4 L1021.4 300.8 L1025.0 300.3 Z" fill="#b2b3b5" stroke="#b2b3b5" stroke-width=".5"/><path d="M1027.9 308.4 L1019.9 315.7 L1021.4 300.8 Z" fill="#afb0b2" stroke="#afb0b2" stroke-width=".5"/><path d="M1019.9 315.7 L1014.6 306.4 L1021.4 300.8 Z" fill="#b5b6b8" stroke="#b5b6b8" stroke-width=".5"/><path d="M1019.9 315.7 L1013.2 323.3 L1014.6 306.4 Z" fill="#c5c6c8" stroke="#c5c6c8" stroke-width=".5"/><path d="M1013.2 323.3 L1003.8 315.3 L1014.6 306.4 Z" fill="#bfc0c2" stroke="#bfc0c2" stroke-width=".5"/><path d="M1013.2 323.3 L1000.3 334.6 L1003.8 315.3 Z" fill="#c2c3c5" stroke="#c2c3c5" stroke-width=".5"/><path d="M1000.3 334.6 L995.8 321.2 L1003.8 315.3 Z" fill="#d0d1d3" stroke="#d0d1d3" stroke-width=".5"/><path d="M1000.3 334.6 L991.9 342.4 L995.8 321.2 Z" fill="#bfc0c2" stroke="#bfc0c2" stroke-width=".5"/><path d="M991.9 342.4 L988.1 329.1 L995.8 321.2 Z" fill="#cccdcf" stroke="#cccdcf" stroke-width=".5"/><path d="M991.9 342.4 L984.8 348.7 L988.1 329.1 Z" fill="#c1c2c4" stroke="#c1c2c4" stroke-width=".5"/><path d="M984.8 348.7 L982.9 337.8 L988.1 329.1 Z" fill="#d0d1d3" stroke="#d0d1d3" stroke-width=".5"/><path d="M984.8 348.7 L983.1 351.7 L982.9 337.8 Z" fill="#b6b7b9" stroke="#b6b7b9" stroke-width=".5"/><path d="M983.1 351.7 L973.4 345.4 L982.9 337.8 Z" fill="#cccdcf" stroke="#cccdcf" stroke-width=".5"/><path d="M983.1 351.7 L968.4 367.7 L973.4 345.4 Z" fill="#c8c9cb" stroke="#c8c9cb" stroke-width=".5"/><path d="M968.4 367.7 L956.4 361.9 L973.4 345.4 Z" fill="#b0b1b3" stroke="#b0b1b3" stroke-width=".5"/><path d="M968.4 367.7 L960.5 372.0 L956.4 361.9 Z" fill="#c2c3c5" stroke="#c2c3c5" stroke-width=".5"/><path d="M960.5 372.0 L956.4 360.0 L956.4 361.9 Z" fill="#cccdcf" stroke="#cccdcf" stroke-width=".5"/><path d="M960.5 372.0 L953.7 376.7 L956.4 360.0 Z" fill="#acadaf" stroke="#acadaf" stroke-width=".5"/><path d="M953.7 376.7 L946.8 365.5 L956.4 360.0 Z" fill="#bcbdbf" stroke="#bcbdbf" stroke-width=".5"/><path d="M953.7 376.7 L946.2 383.6 L946.8 365.5 Z" fill="#babbbd" stroke="#babbbd" stroke-width=".5"/><path d="M946.2 383.6 L942.4 369.3 L946.8 365.5 Z" fill="#b2b3b5" stroke="#b2b3b5" stroke-width=".5"/><path d="M946.2 383.6 L936.0 388.0 L942.4 369.3 Z" fill="#d0d1d3" stroke="#d0d1d3" stroke-width=".5"/><path d="M936.0 388.0 L934.0 376.8 L942.4 369.3 Z" fill="#adaeb0" stroke="#adaeb0" stroke-width=".5"/><path d="M936.0 388.0 L928.6 399.3 L934.0 376.8 Z" fill="#bcbdbf" stroke="#bcbdbf" stroke-width=".5"/><path d="M928.6 399.3 L925.1 387.1 L934.0 376.8 Z" fill="#c1c2c4" stroke="#c1c2c4" stroke-width=".5"/><path d="M928.6 399.3 L914.6 410.2 L925.1 387.1 Z" fill="#b6b7b9" stroke="#b6b7b9" stroke-width=".5"/><path d="M914.6 410.2 L913.0 406.5 L925.1 387.1 Z" fill="#b4b5b7" stroke="#b4b5b7" stroke-width=".5"/><path d="M914.6 410.2 L909.4 416.6 L913.0 406.5 Z" fill="#cbccce" stroke="#cbccce" stroke-width=".5"/><path d="M909.4 416.6 L908.4 413.6 L913.0 406.5 Z" fill="#bcbdbf" stroke="#bcbdbf" stroke-width=".5"/><path d="M909.4 416.6 L895.2 424.3 L908.4 413.6 Z" fill="#b0b1b3" stroke="#b0b1b3" stroke-width=".5"/><path d="M895.2 424.3 L895.6 423.2 L908.4 413.6 Z" fill="#b1b2b4" stroke="#b1b2b4" stroke-width=".5"/><path d="M1096.4 193.2 L1088.5 207.9 L1093.7 195.8 Z" fill="#9d9ea0" stroke="#9d9ea0" stroke-width=".5"/><path d="M1088.5 207.9 L1084.7 211.9 L1093.7 195.8 Z" fill="#a4a5a7" stroke="#a4a5a7" stroke-width=".5"/><path d="M1088.5 207.9 L1078.5 227.8 L1084.7 211.9 Z" fill="#a6a7a9" stroke="#a6a7a9" stroke-width=".5"/><path d="M1078.5 227.8 L1077.3 220.7 L1084.7 211.9 Z" fill="#aaabad" stroke="#aaabad" stroke-width=".5"/><path d="M1078.5 227.8 L1076.0 231.0 L1077.3 220.7 Z" fill="#b1b2b4" stroke="#b1b2b4" stroke-width=".5"/><path d="M1076.0 231.0 L1071.8 226.0 L1077.3 220.7 Z" fill="#b7b8ba" stroke="#b7b8ba" stroke-width=".5"/><path d="M1076.0 231.0 L1067.9 244.9 L1071.8 226.0 Z" fill="#a2a3a5" stroke="#a2a3a5" stroke-width=".5"/><path d="M1067.9 244.9 L1065.2 234.9 L1071.8 226.0 Z" fill="#b7b8ba" stroke="#b7b8ba" stroke-width=".5"/><path d="M1067.9 244.9 L1063.5 245.6 L1065.2 234.9 Z" fill="#a2a3a5" stroke="#a2a3a5" stroke-width=".5"/><path d="M1063.5 245.6 L1058.9 246.5 L1065.2 234.9 Z" fill="#b2b3b5" stroke="#b2b3b5" stroke-width=".5"/><path d="M1063.5 245.6 L1054.9 257.6 L1058.9 246.5 Z" fill="#a0a1a3" stroke="#a0a1a3" stroke-width=".5"/><path d="M1054.9 257.6 L1049.8 258.4 L1058.9 246.5 Z" fill="#babbbd" stroke="#babbbd" stroke-width=".5"/><path d="M1054.9 257.6 L1049.7 263.6 L1049.8 258.4 Z" fill="#acadaf" stroke="#acadaf" stroke-width=".5"/><path d="M1049.7 263.6 L1045.0 259.2 L1049.8 258.4 Z" fill="#b7b8ba" stroke="#b7b8ba" stroke-width=".5"/><path d="M1049.7 263.6 L1041.4 278.3 L1045.0 259.2 Z" fill="#b8b9bb" stroke="#b8b9bb" stroke-width=".5"/><path d="M1041.4 278.3 L1036.0 270.9 L1045.0 259.2 Z" fill="#a5a6a8" stroke="#a5a6a8" stroke-width=".5"/><path d="M1041.4 278.3 L1038.0 283.5 L1036.0 270.9 Z" fill="#aeafb1" stroke="#aeafb1" stroke-width=".5"/><path d="M1038.0 283.5 L1032.7 279.2 L1036.0 270.9 Z" fill="#a8a9ab" stroke="#a8a9ab" stroke-width=".5"/><path d="M1038.0 283.5 L1030.8 292.1 L1032.7 279.2 Z" fill="#b3b4b6" stroke="#b3b4b6" stroke-width=".5"/><path d="M1030.8 292.1 L1028.1 283.6 L1032.7 279.2 Z" fill="#b2b3b5" stroke="#b2b3b5" stroke-width=".5"/><path d="M1030.8 292.1 L1025.0 300.3 L1028.1 283.6 Z" fill="#9e9fa1" stroke="#9e9fa1" stroke-width=".5"/><path d="M1025.0 300.3 L1017.8 294.9 L1028.1 283.6 Z" fill="#b0b1b3" stroke="#b0b1b3" stroke-width=".5"/><path d="M1025.0 300.3 L1021.4 300.8 L1017.8 294.9 Z" fill="#a5a6a8" stroke="#a5a6a8" stroke-width=".5"/><path d="M1021.4 300.8 L1015.3 295.4 L1017.8 294.9 Z" fill="#abacae" stroke="#abacae" stroke-width=".5"/><path d="M1021.4 300.8 L1014.6 306.4 L1015.3 295.4 Z" fill="#a0a1a3" stroke="#a0a1a3" stroke-width=".5"/><path d="M1014.6 306.4 L1003.5 305.4 L1015.3 295.4 Z" fill="#a6a7a9" stroke="#a6a7a9" stroke-width=".5"/><path d="M1014.6 306.4 L1003.8 315.3 L1003.5 305.4 Z" fill="#a4a5a7" stroke="#a4a5a7" stroke-width=".5"/><path d="M1003.8 315.3 L998.6 309.4 L1003.5 305.4 Z" fill="#b1b2b4" stroke="#b1b2b4" stroke-width=".5"/><path d="M1003.8 315.3 L995.8 321.2 L998.6 309.4 Z" fill="#bbbcbe" stroke="#bbbcbe" stroke-width=".5"/><path d="M995.8 321.2 L991.0 316.3 L998.6 309.4 Z" fill="#9e9fa1" stroke="#9e9fa1" stroke-width=".5"/><path d="M995.8 321.2 L988.1 329.1 L991.0 316.3 Z" fill="#9d9ea0" stroke="#9d9ea0" stroke-width=".5"/><path d="M988.1 329.1 L975.0 327.1 L991.0 316.3 Z" fill="#adaeb0" stroke="#adaeb0" stroke-width=".5"/><path d="M988.1 329.1 L982.9 337.8 L975.0 327.1 Z" fill="#afb0b2" stroke="#afb0b2" stroke-width=".5"/><path d="M982.9 337.8 L970.6 333.4 L975.0 327.1 Z" fill="#b3b4b6" stroke="#b3b4b6" stroke-width=".5"/><path d="M982.9 337.8 L973.4 345.4 L970.6 333.4 Z" fill="#a5a6a8" stroke="#a5a6a8" stroke-width=".5"/><path d="M973.4 345.4 L967.9 338.2 L970.6 333.4 Z" fill="#bcbdbf" stroke="#bcbdbf" stroke-width=".5"/><path d="M973.4 345.4 L956.4 361.9 L967.9 338.2 Z" fill="#b2b3b5" stroke="#b2b3b5" stroke-width=".5"/><path d="M956.4 361.9 L956.7 345.4 L967.9 338.2 Z" fill="#a7a8aa" stroke="#a7a8aa" stroke-width=".5"/><path d="M956.4 361.9 L956.4 360.0 L956.7 345.4 Z" fill="#a8a9ab" stroke="#a8a9ab" stroke-width=".5"/><path d="M956.4 360.0 L947.6 353.9 L956.7 345.4 Z" fill="#aaabad" stroke="#aaabad" stroke-width=".5"/><path d="M956.4 360.0 L946.8 365.5 L947.6 353.9 Z" fill="#a5a6a8" stroke="#a5a6a8" stroke-width=".5"/><path d="M946.8 365.5 L938.0 359.4 L947.6 353.9 Z" fill="#9fa0a2" stroke="#9fa0a2" stroke-width=".5"/><path d="M946.8 365.5 L942.4 369.3 L938.0 359.4 Z" fill="#b5b6b8" stroke="#b5b6b8" stroke-width=".5"/><path d="M942.4 369.3 L933.7 361.1 L938.0 359.4 Z" fill="#a8a9ab" stroke="#a8a9ab" stroke-width=".5"/><path d="M942.4 369.3 L934.0 376.8 L933.7 361.1 Z" fill="#9e9fa1" stroke="#9e9fa1" stroke-width=".5"/><path d="M934.0 376.8 L921.8 368.6 L933.7 361.1 Z" fill="#9fa0a2" stroke="#9fa0a2" stroke-width=".5"/><path d="M934.0 376.8 L925.1 387.1 L921.8 368.6 Z" fill="#bfc0c2" stroke="#bfc0c2" stroke-width=".5"/><path d="M925.1 387.1 L921.8 378.4 L921.8 368.6 Z" fill="#acadaf" stroke="#acadaf" stroke-width=".5"/><path d="M925.1 387.1 L913.0 406.5 L921.8 378.4 Z" fill="#aeafb1" stroke="#aeafb1" stroke-width=".5"/><path d="M913.0 406.5 L911.1 398.5 L921.8 378.4 Z" fill="#aeafb1" stroke="#aeafb1" stroke-width=".5"/><path d="M913.0 406.5 L908.4 413.6 L911.1 398.5 Z" fill="#a9aaac" stroke="#a9aaac" stroke-width=".5"/><path d="M908.4 413.6 L905.7 413.8 L911.1 398.5 Z" fill="#b2b3b5" stroke="#b2b3b5" stroke-width=".5"/><path d="M908.4 413.6 L895.6 423.2 L905.7 413.8 Z" fill="#9fa0a2" stroke="#9fa0a2" stroke-width=".5"/><path d="M895.6 423.2 L896.4 419.4 L905.7 413.8 Z" fill="#b0b1b3" stroke="#b0b1b3" stroke-width=".5"/></g>
</g>
<g clip-path="url(#silc)"><line x1="43" y1="104" x2="1325" y2="599" stroke="#c0c1c3" stroke-width="1.5" opacity="0.8"/><line x1="43" y1="727" x2="604" y2="944" stroke="#c0c1c3" stroke-width="1.5" opacity="0.8"/><line x1="807" y1="88" x2="1325" y2="290" stroke="#c0c1c3" stroke-width="1.5" opacity="0.8"/><line x1="43" y1="415" x2="1325" y2="913" stroke="#c0c1c3" stroke-width="1.5" opacity="0.8"/><line x1="271" y1="88" x2="43" y2="253" stroke="#c0c1c3" stroke-width="1.5" opacity="0.8"/><line x1="857.8" y1="88" x2="43" y2="680.5" stroke="#c0c1c3" stroke-width="1.5" opacity="0.8"/><line x1="1325" y1="172" x2="267" y2="944" stroke="#c0c1c3" stroke-width="1.5" opacity="0.8"/><line x1="1325" y1="600" x2="850" y2="944" stroke="#c0c1c3" stroke-width="1.5" opacity="0.8"/></g>
<g transform="translate(554,553.5) rotate(97)"><clipPath id="hc0"><rect x="-1.86" y="-12" width="30" height="24"/></clipPath><circle r="9.3" fill="url(#gM)" clip-path="url(#hc0)"/></g><g transform="translate(539.7,565.5) rotate(83)"><clipPath id="hc1"><rect x="-1.86" y="-12" width="30" height="24"/></clipPath><circle r="9.3" fill="url(#gM)" clip-path="url(#hc1)"/></g><g transform="translate(463,511) rotate(125)"><clipPath id="hc2"><rect x="0.00" y="-12" width="30" height="24"/></clipPath><circle r="9.3" fill="url(#gM)" clip-path="url(#hc2)"/></g><g transform="translate(473.5,518) rotate(125)"><clipPath id="hc3"><rect x="0.00" y="-12" width="30" height="24"/></clipPath><circle r="9.3" fill="url(#gM)" clip-path="url(#hc3)"/></g><g transform="translate(503.6,606.5) rotate(108)"><clipPath id="hc4"><rect x="-2.23" y="-12" width="30" height="24"/></clipPath><circle r="9.3" fill="url(#gT)" clip-path="url(#hc4)"/></g><g transform="translate(498,616.9) rotate(125)"><clipPath id="hc5"><rect x="-0.93" y="-12" width="30" height="24"/></clipPath><circle r="9.3" fill="url(#gM)" clip-path="url(#hc5)"/></g><g transform="translate(736,854) rotate(-92)"><clipPath id="hc6"><rect x="-4.65" y="-12" width="30" height="24"/></clipPath><circle r="9.3" fill="url(#gM)" clip-path="url(#hc6)"/></g><g transform="translate(782,861) rotate(88)"><clipPath id="hc7"><rect x="-3.35" y="-12" width="30" height="24"/></clipPath><circle r="9.3" fill="url(#gM)" clip-path="url(#hc7)"/></g><g transform="translate(1165,567.5) rotate(180)"><clipPath id="hc8"><rect x="-1.30" y="-12" width="30" height="24"/></clipPath><circle r="9.3" fill="url(#gM)" clip-path="url(#hc8)"/></g><g transform="translate(1194.7,643.5) rotate(20)"><clipPath id="hc9"><rect x="-4.65" y="-12" width="30" height="24"/></clipPath><circle r="9.3" fill="url(#gM)" clip-path="url(#hc9)"/></g><g transform="translate(1171,698.4) rotate(40)"><clipPath id="hc10"><rect x="-3.72" y="-12" width="30" height="24"/></clipPath><circle r="9.3" fill="url(#gM)" clip-path="url(#hc10)"/></g><path transform="translate(0,0)" d="M489.8 535 C495 536 501.5 542 500.8 548 C500.5 552 497 553 493.7 552.5 C490 552 487 550.5 486 547.5 C485 544 486 538 489.8 535 Z" fill="url(#gM)"/><path transform="translate(-7.7,12.1)" d="M489.8 535 C495 536 501.5 542 500.8 548 C500.5 552 497 553 493.7 552.5 C490 552 487 550.5 486 547.5 C485 544 486 538 489.8 535 Z" fill="url(#gM)"/><path transform="translate(-16.5,26.2)" d="M489.8 535 C495 536 501.5 542 500.8 548 C500.5 552 497 553 493.7 552.5 C490 552 487 550.5 486 547.5 C485 544 486 538 489.8 535 Z" fill="url(#gM)"/><path transform="translate(816,467.4) rotate(-30)" d="M-6.0 -2.5 Q0 -3.5 6.0 -2.5 Q1.8 5.5 -6.0 -2.5 Z" fill="#e23bbd"/><path transform="translate(665.6,517.5) rotate(-18)" d="M-7.0 -2.5 Q0 -3.5 7.0 -2.5 Q2.1 5.5 -7.0 -2.5 Z" fill="#e23bbd"/><path transform="translate(891,452.5) rotate(-10)" d="M-4.0 -1.5 Q0 -2.5 4.0 -1.5 Q1.2 3.3 -4.0 -1.5 Z" fill="#e23bbd"/><path transform="translate(441,494.5) rotate(41)" d="M-6.0 -1.75 Q0 -2.75 6.0 -1.75 Q1.8 3.9 -6.0 -1.75 Z" fill="#e23bbd"/><circle cx="669.6" cy="456.4" r="9.300" fill="url(#gM)"/><circle cx="716.4" cy="450.6" r="9.300" fill="url(#gS)"/><circle cx="867.8" cy="450.4" r="9.300" fill="url(#gT)"/><circle cx="742.6" cy="501.6" r="9.300" fill="url(#gT)"/><circle cx="622" cy="528" r="9.300" fill="url(#gM)"/><circle cx="560" cy="538.6" r="9.300" fill="url(#gO)"/><circle cx="579" cy="628.2" r="9.300" fill="url(#gM)"/><circle cx="551" cy="681.6" r="9.300" fill="url(#gM)"/><circle cx="622.4" cy="733" r="9.300" fill="url(#gM)"/><circle cx="669.2" cy="730.6" r="9.300" fill="url(#gM)"/><circle cx="716.3" cy="726" r="9.300" fill="url(#gM)"/><circle cx="759.5" cy="709.6" r="9.300" fill="url(#gM)"/><circle cx="808.7" cy="714.8" r="9.300" fill="url(#gM)"/><circle cx="855.1" cy="737.3" r="9.300" fill="url(#gM)"/><circle cx="903.1" cy="726.6" r="9.300" fill="url(#gM)"/><circle cx="947.2" cy="700.7" r="9.300" fill="url(#gM)"/><circle cx="994.5" cy="702.6" r="9.300" fill="url(#gM)"/><circle cx="1037" cy="682.8" r="9.300" fill="url(#gM)"/><circle cx="781.2" cy="754.2" r="9.300" fill="url(#gM)"/><circle cx="737.3" cy="772" r="9.300" fill="url(#gM)"/><circle cx="693" cy="781.7" r="9.300" fill="url(#gM)"/><circle cx="821.8" cy="803" r="9.300" fill="url(#gM)"/><circle cx="871.2" cy="827.6" r="9.300" fill="url(#gM)"/><circle cx="1037.6" cy="764" r="9.300" fill="url(#gM)"/><circle cx="794.3" cy="855.7" r="9.300" fill="url(#gO)"/><circle cx="848.7" cy="869.2" r="9.300" fill="url(#gM)"/><circle cx="940.6" cy="828.5" r="9.300" fill="url(#gT)"/><circle cx="1009.6" cy="805.4" r="9.300" fill="url(#gM)"/><circle cx="960.6" cy="427.4" r="9.300" fill="url(#gM)"/><circle cx="1045" cy="431.6" r="9.300" fill="url(#gM)"/><circle cx="982" cy="386" r="9.300" fill="url(#gM)"/><circle cx="978" cy="465.6" r="9.300" fill="url(#gT)"/><circle cx="1116" cy="483" r="9.300" fill="url(#gT)"/><circle cx="1161.4" cy="527" r="9.300" fill="url(#gT)"/><circle cx="1116.4" cy="715.6" r="9.300" fill="url(#gM)"/>
<g fill="none" stroke-width="4"><ellipse cx="702.700" cy="438" rx="93.500" ry="41.300" stroke="#30343a" opacity=".45" filter="url(#es)" transform="translate(0,1.500)"/><ellipse cx="702.700" cy="436.500" rx="93.500" ry="41.300" stroke="#e02708" transform="rotate(1.200 702.700 436.500)"/><ellipse cx="996" cy="493.800" rx="55.300" ry="55.500" stroke="#30343a" opacity=".45" filter="url(#es)" transform="translate(0,1.500)"/><ellipse cx="996" cy="492.300" rx="55.300" ry="55.500" stroke="#e02708"/></g>
</svg>
<div class="tbox" style="top:94.500px;height:36.500px"></div>
<div class="tbox" style="top:138px;height:148px"></div>
<div class="tbox" style="top:292.500px;height:148px"></div>
<svg class="abs" style="left:59px;top:99px" width="18" height="18" viewBox="0 0 18 18"><path d="M2 15.200 L10.500 6.700 L12.300 8.500 L3.800 17 Z" fill="#c0c5cc"/><path d="M11.300 5.900 L12.600 4.600 L14.400 6.400 L13.100 7.700 Z" fill="#c0c5cc"/><g stroke="#c0c5cc" stroke-width="1" stroke-linecap="round"><path d="M7 1.500 l2 2 m0 -2 l-2 2 M14 1.500 l2 2 m0 -2 l-2 2 M14.500 9.500 l2 2 m0 -2 l-2 2"/></g></svg>
<div class="tl7" style="top:119.500px">1-Click</div>
<svg class="abs" style="left:60px;top:145px" width="17" height="14" viewBox="0 0 17 14"><rect x="1" y="1" width="15" height="12" fill="none" stroke="#c0c5cc" stroke-width="1.200" stroke-dasharray="1.500 1.500"/><rect x="0.500" y="8.500" width="6.500" height="5" fill="#c0c5cc"/></svg>
<div class="tl7" style="top:163px">Size</div>
<svg class="abs" style="left:60px;top:181px" width="17" height="17" viewBox="0 0 17 17"><path d="M0.500 8 L5.500 3 L10.500 8 L5.500 13 Z" fill="#c0c5cc"/><path d="M9.500 3.200 A6 6 0 1 1 6.500 15.300" fill="none" stroke="#c0c5cc" stroke-width="1.400"/><path d="M10 0.300 L6.800 3.200 L10 6 Z" fill="#c0c5cc"/></svg>
<div class="tl7" style="top:200px">Orient</div>
<svg class="abs" style="left:60px;top:218px" width="17" height="16" viewBox="0 0 17 16"><path d="M3.500 5.500 L5.500 1 L14 5 L12.500 9 Z" fill="#c0c5cc"/><g stroke="#c0c5cc" stroke-width="1.200" fill="none"><path d="M1 14.500 H16 M4.500 14.500 V7 M8.500 14.500 V9.500 M12.500 14.500 V9.500 M4.500 10 L8.500 12"/></g></svg>
<div class="tl7" style="top:237px">Support</div>
<svg class="abs" style="left:60px;top:255px" width="17" height="17" viewBox="0 0 17 17"><rect x="0.500" y="0.500" width="7" height="9.500" fill="#c0c5cc"/><rect x="9" y="0.500" width="7.500" height="5.500" fill="#c0c5cc"/><rect x="0.500" y="11.500" width="7" height="5" fill="#c0c5cc"/><rect x="9" y="7.500" width="7.500" height="9" fill="#c0c5cc"/></svg>
<div class="tl7" style="top:274px">Layout</div>
<svg class="abs" style="left:60px;top:298px" width="17" height="17" viewBox="0 0 17 17"><path d="M0.500 4.500 V12.500 C0.500 15 4 16.500 8.500 16.500 C13 16.500 16.500 15 16.500 12.500 V4.500 Z" fill="#c0c5cc"/><ellipse cx="8.500" cy="4.500" rx="8" ry="3.800" fill="#c0c5cc"/><ellipse cx="8.500" cy="4.500" rx="5" ry="2" fill="none" stroke="#fff" stroke-width="1"/></svg>
<div class="tl7" style="top:318px">Hollow</div>
<svg class="abs" style="left:61px;top:336px" width="15" height="15" viewBox="0 0 15 15"><g stroke="#c0c5cc" stroke-width="1.400"><path d="M1.500 0 V15 M4.500 0 V15 M7.500 0 V15 M10.500 0 V15 M13.500 0 V15 M0 1.500 H15 M0 4.500 H15 M0 7.500 H15 M0 10.500 H15 M0 13.500 H15"/></g></svg>
<div class="tl7" style="top:355px">Texture</div>
<div class="abs" style="left:49.500px;width:37px;top:372px;text-align:center;font-weight:bold;font-size:12.500px;color:#c0c5cc;line-height:16px;letter-spacing:-.3px">Aa</div>
<div class="tl7" style="top:392px">Label</div>
<svg class="abs" style="left:60px;top:409px" width="17" height="17" viewBox="0 0 17 17"><path d="M8.500 0.500 L16 3.500 V13 L8.500 16.500 L1 13 V3.500 Z" fill="#c0c5cc"/><path d="M1 3.500 L8.500 6.500 V16.500 L1 13 Z" fill="#fff" opacity=".35"/><rect x="3" y="7" width="3" height="5" fill="#fff" transform="skewY(20) translate(0,-1.500)"/></svg>
<div class="tl7" style="top:429px">Hole</div>
<div id="sp">
<div class="abs" style="left:0;top:0;width:296px;height:31px;background:#fff;border-bottom:1px solid #e6eaee"></div>
<div class="abs" style="left:0;top:32px;width:296px;height:25px;background:#fff;border-left:2px solid #0a6fd6;border-bottom:1px solid #e9edf0"></div>
<div class="abs" style="left:0;top:509px;width:296px;height:39px;background:#fff;border-top:1px solid #e3e7eb"></div>
</div>
<div class="abs" style="left:101.500px;top:101px;font-weight:bold;font-size:13.600px;line-height:18px;color:#2f3744;letter-spacing:-.25px">Supports</div>
<div class="abs" style="left:165px;top:101px;width:32px;height:18px;border-radius:3px;background:#fdeee4;color:#f26a1b;font-weight:bold;font-size:8.500px;line-height:18px;text-align:center;letter-spacing:.6px">NEW</div>
<svg class="abs" style="left:374px;top:106px" width="10" height="10" viewBox="0 0 10 10"><path d="M1.300 1.300 L8.700 8.700 M8.700 1.300 L1.300 8.700" stroke="#1e2530" stroke-width="1.500"/></svg>
<svg class="abs" style="left:107px;top:133.500px" width="11" height="11" viewBox="0 0 11 11"><circle cx="5.500" cy="5.500" r="5.300" fill="#0a6fd6"/><rect x="4.900" y="4.700" width="1.300" height="3.600" fill="#fff"/><rect x="4.900" y="2.600" width="1.300" height="1.300" fill="#fff"/></svg>
<div class="abs" style="left:125px;top:132px;font-size:11px;line-height:14px;color:#4a5260;white-space:nowrap;letter-spacing:-.12px">Improved Support Tool</div>
<div class="abs" style="left:379.500px;top:136px;width:0;height:0;border-left:3.500px solid #1e2530;border-top:3px solid transparent;border-bottom:3px solid transparent"></div>
<div class="h12" style="left:101.500px;top:157px">Touchpoint Placement</div>
<div class="card" style="left:101px;top:174.500px;width:283.500px;height:24px;border-radius:3px"></div>
<div class="abs" style="left:101.500px;top:174.500px;width:142px;height:23px;line-height:23px;text-align:center;font-size:10.700px;color:#7b8594;letter-spacing:-.1px">Auto Placement</div>
<div class="abs" style="left:245.500px;top:176px;width:137.500px;height:21px;line-height:21px;text-align:center;font-size:10.700px;letter-spacing:-.1px;color:#fff;background:#0a6fd6;border-radius:3px">Manual Placement</div>
<div class="card" style="left:101px;top:203px;width:283.500px;height:228px"></div>
<div class="abs" style="left:108px;top:208px;width:132.500px;height:66px;border:1px solid #e3e7eb;border-radius:5px;background:#fff"></div>
<div class="abs" style="left:247px;top:208px;width:132px;height:66px;border:1px solid #2b7fd4;border-radius:5px;background:#e2edf9"></div>
<svg class="abs" style="left:163px;top:222px" width="22" height="22" viewBox="-1 -1 22 22"><g fill="#4f5866"><circle cx="-0.2" cy="4.2" r="0.4" opacity="0.55"/><circle cx="-0.2" cy="8.1" r="0.6" opacity="0.8"/><circle cx="-0.2" cy="11.9" r="0.6" opacity="0.8"/><circle cx="-0.2" cy="15.8" r="0.4" opacity="0.55"/><circle cx="3.9" cy="0.2" r="0.4" opacity="0.55"/><circle cx="3.9" cy="4.2" r="0.6" opacity="0.8"/><circle cx="3.9" cy="8.1" r="0.85" opacity="1"/><circle cx="3.9" cy="11.9" r="0.85" opacity="1"/><circle cx="3.9" cy="15.8" r="0.6" opacity="0.8"/><circle cx="3.9" cy="19.8" r="0.4" opacity="0.55"/><circle cx="8.0" cy="0.2" r="0.6" opacity="0.8"/><circle cx="8.0" cy="4.2" r="0.85" opacity="1"/><circle cx="8.0" cy="8.1" r="1.15" opacity="1"/><circle cx="8.0" cy="11.9" r="1.15" opacity="1"/><circle cx="8.0" cy="15.8" r="0.85" opacity="1"/><circle cx="8.0" cy="19.8" r="0.6" opacity="0.8"/><circle cx="12.1" cy="0.2" r="0.6" opacity="0.8"/><circle cx="12.1" cy="4.2" r="0.85" opacity="1"/><circle cx="12.1" cy="8.1" r="1.15" opacity="1"/><circle cx="12.1" cy="11.9" r="1.15" opacity="1"/><circle cx="12.1" cy="15.8" r="0.85" opacity="1"/><circle cx="12.1" cy="19.8" r="0.6" opacity="0.8"/><circle cx="16.1" cy="0.2" r="0.4" opacity="0.55"/><circle cx="16.1" cy="4.2" r="0.6" opacity="0.8"/><circle cx="16.1" cy="8.1" r="0.85" opacity="1"/><circle cx="16.1" cy="11.9" r="0.85" opacity="1"/><circle cx="16.1" cy="15.8" r="0.6" opacity="0.8"/><circle cx="16.1" cy="19.8" r="0.4" opacity="0.55"/><circle cx="20.2" cy="4.2" r="0.4" opacity="0.55"/><circle cx="20.2" cy="8.1" r="0.6" opacity="0.8"/><circle cx="20.2" cy="11.9" r="0.6" opacity="0.8"/><circle cx="20.2" cy="15.8" r="0.4" opacity="0.55"/></g></svg>
<div class="abs lab" style="left:108px;width:132px;top:249px;text-align:center;color:#7b8594">Create</div>
<svg class="abs" style="left:304px;top:224px" width="18" height="18" viewBox="0 0 18 18"><rect x="1" y="1" width="16" height="16" fill="none" stroke="#0a6fd6" stroke-width="1.100" stroke-dasharray="2 2"/></svg>
<div class="abs lab" style="left:247px;width:132px;top:249px;text-align:center;color:#0a6fd6">Select &amp; Edit</div>
<div class="abs lab" style="left:107.5px;top:289.5px;">Touchpoint Size</div><svg class="abs" style="left:189px;top:290.5px" width="12" height="12" viewBox="0 0 12 12"><circle cx="6" cy="6" r="5" fill="none" stroke="#5d6776" stroke-width="1"/><rect x="5.450" y="5.200" width="1.100" height="3.400" fill="#5d6776"/><rect x="5.450" y="3.200" width="1.100" height="1.200" fill="#5d6776"/></svg><div class="abs inp" style="left:297.800px;top:285.5px;width:81.500px;height:23.0px;background:#fff"></div><div class="abs" style="left:298px;width:64px;top:290.0px;height:14px;line-height:14px;text-align:right;font-size:11px;color:#333b49">0.40 mm</div><svg class="abs" style="left:367px;top:289.0px" width="6" height="16" viewBox="0 0 6 16"><path d="M0.500 5 L3 2.200 L5.500 5 Z M0.500 11 L3 13.800 L5.500 11 Z" fill="#333b49"/></svg>
<div class="abs lab" style="left:107.5px;top:316.5px;">Brush Radius</div><svg class="abs" style="left:175px;top:317.5px" width="12" height="12" viewBox="0 0 12 12"><circle cx="6" cy="6" r="5" fill="none" stroke="#5d6776" stroke-width="1"/><rect x="5.450" y="5.200" width="1.100" height="3.400" fill="#5d6776"/><rect x="5.450" y="3.200" width="1.100" height="1.200" fill="#5d6776"/></svg><div class="abs inp" style="left:297.800px;top:312.5px;width:81.500px;height:23.5px;background:#fff"></div><div class="abs" style="left:298px;width:64px;top:317.25px;height:14px;line-height:14px;text-align:right;font-size:11px;color:#333b49">4.0 mm</div><svg class="abs" style="left:367px;top:316.25px" width="6" height="16" viewBox="0 0 6 16"><path d="M0.500 5 L3 2.200 L5.500 5 Z M0.500 11 L3 13.800 L5.500 11 Z" fill="#333b49"/></svg>
<div class="abs" style="left:112px;top:344.200px;width:263px;height:2.600px;border-radius:1.300px;background:#7db7ea"></div><div class="abs" style="left:195px;top:341px;width:9px;height:9px;border-radius:50%;background:#0a6fd6"></div>
<div class="abs lab" style="left:107.5px;top:362px;">Spacing</div><svg class="abs" style="left:152px;top:363px" width="12" height="12" viewBox="0 0 12 12"><circle cx="6" cy="6" r="5" fill="none" stroke="#5d6776" stroke-width="1"/><rect x="5.450" y="5.200" width="1.100" height="3.400" fill="#5d6776"/><rect x="5.450" y="3.200" width="1.100" height="1.200" fill="#5d6776"/></svg><div class="abs inp" style="left:297.800px;top:357.5px;width:81.500px;height:24.0px;background:#eef1f4"></div><div class="abs" style="left:298px;width:64px;top:362.5px;height:14px;line-height:14px;text-align:right;font-size:11px;color:#c9ced5">2.0 mm</div><svg class="abs" style="left:367px;top:361.5px" width="6" height="16" viewBox="0 0 6 16"><path d="M0.500 5 L3 2.200 L5.500 5 Z M0.500 11 L3 13.800 L5.500 11 Z" fill="#4a5260"/></svg>
<div class="abs" style="left:112px;top:389.700px;width:263px;height:2.600px;border-radius:1.300px;background:#8a929d"></div><div class="abs" style="left:149px;top:386.500px;width:9px;height:9px;border-radius:50%;background:#6d7785"></div>
<div class="abs" style="left:107.500px;top:403px;width:271px;height:22.500px;border:1px solid #a9cbee;border-radius:12px;background:#fff;text-align:center;line-height:20.500px;font-size:11px;color:#0a6fd6">Support All Minima</div>
<div class="h12" style="left:101.500px;top:437px">Support Structure</div>
<div class="card" style="left:101px;top:454px;width:283.500px;height:143.500px"></div>
<div class="abs" style="left:102px;top:455px;width:94px;height:22px;background:#d9eafb;border-radius:3px 0 0 0"></div>
<div class="abs" style="left:102.500px;top:477px;width:281px;height:1px;background:#e3e7eb"></div>
<div class="abs" style="left:196px;top:455.500px;width:1px;height:21.500px;background:#e3e7eb"></div><div class="abs" style="left:290px;top:455.500px;width:1px;height:21.500px;background:#e3e7eb"></div>
<div class="abs" style="left:102px;width:94px;top:458.500px;text-align:center;font-weight:bold;font-size:11px;line-height:14px;color:#0a5fb8;letter-spacing:-.2px">Touchpoints</div>
<div class="abs" style="left:196px;width:94px;top:458.500px;text-align:center;font-weight:bold;font-size:11px;line-height:14px;color:#4a5260;letter-spacing:-.2px">Pillars</div>
<div class="abs" style="left:290px;width:94px;top:458.500px;text-align:center;font-weight:bold;font-size:11px;line-height:14px;color:#4a5260;letter-spacing:-.2px">Rafts</div>
<div class="abs lab" style="left:107.5px;top:488.5px;">Tooth Length Min</div><svg class="abs" style="left:194px;top:489.5px" width="12" height="12" viewBox="0 0 12 12"><circle cx="6" cy="6" r="5" fill="none" stroke="#5d6776" stroke-width="1"/><rect x="5.450" y="5.200" width="1.100" height="3.400" fill="#5d6776"/><rect x="5.450" y="3.200" width="1.100" height="1.200" fill="#5d6776"/></svg><div class="abs inp" style="left:297.800px;top:484.5px;width:81.500px;height:22.5px;background:#fff"></div><div class="abs" style="left:298px;width:64px;top:488.75px;height:14px;line-height:14px;text-align:right;font-size:11px;color:#333b49">2.00 mm</div><svg class="abs" style="left:367px;top:487.75px" width="6" height="16" viewBox="0 0 6 16"><path d="M0.500 5 L3 2.200 L5.500 5 Z M0.500 11 L3 13.800 L5.500 11 Z" fill="#333b49"/></svg>
<div class="abs lab" style="left:107.500px;top:512px;line-height:11px;height:22px;white-space:normal;width:120px">Allow Internal Supports on Model</div><svg class="abs" style="left:222.5px;top:517.5px" width="12" height="12" viewBox="0 0 12 12"><circle cx="6" cy="6" r="5" fill="none" stroke="#5d6776" stroke-width="1"/><rect x="5.450" y="5.200" width="1.100" height="3.400" fill="#5d6776"/><rect x="5.450" y="3.200" width="1.100" height="1.200" fill="#5d6776"/></svg>
<div class="abs" style="left:360px;top:518.500px;width:19px;height:10px;border-radius:5px;background:#0a6fd6"></div><div class="abs" style="left:370.500px;top:520px;width:7px;height:7px;border-radius:50%;background:#fff"></div>
<div class="abs lab" style="left:107.5px;top:544.5px;">Bottom Diameter</div><svg class="abs" style="left:193px;top:545.5px" width="12" height="12" viewBox="0 0 12 12"><circle cx="6" cy="6" r="5" fill="none" stroke="#5d6776" stroke-width="1"/><rect x="5.450" y="5.200" width="1.100" height="3.400" fill="#5d6776"/><rect x="5.450" y="3.200" width="1.100" height="1.200" fill="#5d6776"/></svg><div class="abs inp" style="left:297.800px;top:540.5px;width:81.500px;height:22.5px;background:#fff"></div><div class="abs" style="left:298px;width:64px;top:544.75px;height:14px;line-height:14px;text-align:right;font-size:11px;color:#333b49">0.80 mm</div><svg class="abs" style="left:367px;top:543.75px" width="6" height="16" viewBox="0 0 6 16"><path d="M0.500 5 L3 2.200 L5.500 5 Z M0.500 11 L3 13.800 L5.500 11 Z" fill="#333b49"/></svg>
<div class="abs lab" style="left:107.5px;top:572px;">Number of Teeth Max</div><svg class="abs" style="left:214px;top:573px" width="12" height="12" viewBox="0 0 12 12"><circle cx="6" cy="6" r="5" fill="none" stroke="#5d6776" stroke-width="1"/><rect x="5.450" y="5.200" width="1.100" height="3.400" fill="#5d6776"/><rect x="5.450" y="3.200" width="1.100" height="1.200" fill="#5d6776"/></svg><div class="abs inp" style="left:297.800px;top:568px;width:81.500px;height:22.5px;background:#fff"></div><div class="abs" style="left:298px;width:64px;top:572.25px;height:14px;line-height:14px;text-align:right;font-size:11px;color:#333b49">3</div><svg class="abs" style="left:367px;top:571.25px" width="6" height="16" viewBox="0 0 6 16"><path d="M0.500 5 L3 2.200 L5.500 5 Z M0.500 11 L3 13.800 L5.500 11 Z" fill="#333b49"/></svg>
<div class="abs" style="left:101.500px;top:613.500px;width:138.500px;height:22.500px;border-radius:12px;background:#e4e7ea;text-align:center;line-height:22.500px;font-size:11px;color:#c3c8cf">Generate Structure</div>
<div class="abs" style="left:247px;top:613.500px;width:137.500px;height:22.500px;border-radius:12px;background:#fff;border:1px solid #e3e7eb;text-align:center;line-height:20.500px;font-size:11px;color:#c3c8cf">Discard Edits</div>
<div class="abs" style="left:1170px;top:106.500px;width:77.500px;height:25px;border-radius:12.500px;background:#fff;box-shadow:0 1px 4px rgba(40,50,70,.25)"></div>
<div class="abs" style="left:1221px;top:106.500px;width:26.500px;height:25px;border-radius:0 12.500px 12.500px 0;background:#dfeaf7;border:1px solid #1d7fd9"></div>
<svg class="abs" style="left:1179.5px;top:112.8px" width="10" height="12" viewBox="0 0 10 12"><path d="M3.800 9.700 V5.600 Q3.800 4.900 3.400 4.400 L1.600 1.400 L2.300 0.900 L5.400 3.600 Q6.200 4.400 6.200 5.400 V9.700 Z" fill="#2f3744"/><path d="M1.600 1.400 L2.300 0.900 L5.400 3.600 Q5.900 4.100 6.100 4.800 L3.800 5.400 Q3.700 4.800 3.400 4.400 Z" fill="#2f3744"/><rect x="1.300" y="9.400" width="7.400" height="1.600" rx=".4" fill="#2f3744"/></svg>
<svg class="abs" style="left:1203.6px;top:112.8px" width="10" height="12" viewBox="0 0 10 12"><path d="M3.800 9.700 V5.600 Q3.800 4.900 3.400 4.400 L1.600 1.400 L2.300 0.900 L5.400 3.600 Q6.200 4.400 6.200 5.400 V9.700 Z" fill="#d9dde1"/><path d="M1.600 1.400 L2.300 0.900 L5.400 3.600 Q5.900 4.100 6.100 4.800 L3.800 5.400 Q3.700 4.800 3.400 4.400 Z" fill="#3b4250"/><rect x="1.300" y="9.400" width="7.400" height="1.600" rx=".4" fill="#d9dde1"/></svg>
<svg class="abs" style="left:1228.6px;top:112.8px" width="10" height="12" viewBox="0 0 10 12"><path d="M3.800 9.700 V5.600 Q3.800 4.900 3.400 4.400 L1.600 1.400 L2.300 0.900 L5.400 3.600 Q6.200 4.400 6.200 5.400 V9.700 Z" fill="#9ac7ef"/><path d="M1.600 1.400 L2.300 0.900 L5.400 3.600 Q5.900 4.100 6.100 4.800 L3.800 5.400 Q3.700 4.800 3.400 4.400 Z" fill="#5aa3e6"/><rect x="1.300" y="9.400" width="7.400" height="1.600" rx=".4" fill="#9ac7ef"/></svg>
<svg class="abs" style="left:1252px;top:88px" width="72" height="76" viewBox="1252 88 72 76">
<defs><filter id="cs" x="-20%" y="-20%" width="140%" height="140%"><feGaussianBlur stdDeviation="1.300"/></filter></defs>
<path id="cubeo" d="M1282.500 96.200 Q1284.800 95 1287.200 95.900 L1309 104.300 Q1312.600 105.800 1314 109.500 Q1315 112 1315 115 L1314.800 131 Q1314.800 135.500 1311.500 138.200 L1292.500 153.300 Q1289.600 155.400 1286.500 153.600 L1263.500 140.300 Q1260 138.200 1260 134.200 L1260 114.500 Q1260 111 1263 109 Z" fill="#7d848e" opacity=".4" filter="url(#cs)" transform="translate(0,1.200)"/>
<path d="M1282.500 96.200 Q1284.800 95 1287.200 95.900 L1309 104.300 Q1312.600 105.800 1314 109.500 Q1315 112 1315 115 L1314.800 131 Q1314.800 135.500 1311.500 138.200 L1292.500 153.300 Q1289.600 155.400 1286.500 153.600 L1263.500 140.300 Q1260 138.200 1260 134.200 L1260 114.500 Q1260 111 1263 109 Z" fill="#e6e8eb" stroke="#cfd3d8" stroke-width=".6"/>
<path d="M1279.200 99.800 L1263.500 109.800 Q1260.600 111.800 1260.600 114.500 L1260.600 136.200 L1279.200 122.600 Z" fill="#fdfdfd"/>
<path d="M1279.200 99.800 L1287.200 99 L1287.200 122.600 L1279.200 122.600 Z" fill="#f3f4f6"/>
<path d="M1287.200 99 L1309 105.300 Q1312.500 106.500 1313.600 109.500 Q1314.400 111.500 1314.400 114 L1314.400 133 L1289.200 126.600 L1287.200 122.600 Z" fill="#d0d3d7"/>
<path d="M1279.200 122.600 L1287.200 122.600 L1289.200 126.600 L1286.400 132.200 L1280.800 131.400 L1278.400 126.600 Z" fill="#eceef0"/>
<path d="M1289.200 126.600 L1314.400 133 Q1314 136 1310.400 138.500 L1286.400 132.200 Z" fill="#c4c7cc"/>
<path d="M1260.600 136.200 L1279.200 122.600 L1278.400 126.600 L1280.800 131.400 L1266.400 142 Q1261 139.500 1260.600 136.200 Z" fill="#dde0e4"/>
<path d="M1280.800 131.400 L1286.400 132.200 L1310.400 138.500 L1292 153 Q1289.600 154.800 1287 153.400 L1266.400 142 Z" fill="#b9bcc2"/>
<text font-family="Liberation Sans, sans-serif" font-weight="bold" font-size="8.400" fill="#262e3b" stroke="#262e3b" stroke-width=".55" transform="matrix(0.470,-0.340,-0.080,1,1264.300,125.200)">RIGHT</text>
<text font-family="Liberation Sans, sans-serif" font-weight="bold" font-size="8.900" fill="#262e3b" stroke="#262e3b" stroke-width=".45" transform="matrix(0.590,0.190,0.080,1,1293.200,116.200)">BACK</text>
<text font-family="Liberation Sans, sans-serif" font-weight="bold" font-size="7" fill="#262e3b" stroke="#262e3b" stroke-width=".5" transform="matrix(-0.800,-0.300,0.500,-0.560,1301.500,147.200)">BOTTOM</text>
</svg>
<div class="cbtn" style="left:1238px;top:150px"></div>
<svg class="abs" style="left:1245px;top:157px" width="11" height="11" viewBox="0 0 11 11"><path d="M5.500 0.800 L10.500 5.500 H9 V10 H6.500 V7 H4.500 V10 H2 V5.500 H0.500 Z" fill="#2f3744"/></svg>
<div class="cbtn" style="left:1275px;top:168.500px"></div>
<svg class="abs" style="left:1280px;top:174px" width="15" height="15" viewBox="0 0 15 15"><g transform="rotate(-35 7.500 7.500)"><rect x="2" y="5" width="11" height="5" fill="#2f3744"/><path d="M4.500 5 v2 M6.500 5 v2 M8.500 5 v2 M10.500 5 v2" stroke="#fff" stroke-width=".7"/></g></svg>
<div class="abs" style="left:1284px;top:211px;width:7px;height:292px;border-radius:3.500px;background:#fff;box-shadow:0 0 2px rgba(40,50,70,.10)"></div>
<div class="abs" style="left:1282.500px;top:500px;width:10px;height:10px;border-radius:50%;background:#c3c6ca;box-shadow:0 1px 2px rgba(40,50,70,.2)"></div>
<div class="abs" style="left:1264px;top:540.500px;width:47px;height:13px;border-radius:3px;background:#fff;box-shadow:0 1px 3px rgba(40,50,70,.22)"></div>
<div class="abs" style="left:1280px;top:528px;width:15px;height:37.500px;border-radius:3px;background:#fff;box-shadow:0 1px 3px rgba(40,50,70,.22)"></div>
<div class="abs" style="left:1264px;top:540.500px;width:47px;height:13px;border-radius:3px;background:#fff"></div>
<div class="abs" style="left:1264px;top:540.500px;width:16px;height:13px;line-height:13px;text-align:center;font-size:9px;color:#1e2530">X</div>
<div class="abs" style="left:1280px;top:540.500px;width:15px;height:13px;line-height:13px;text-align:center;font-size:9px;color:#1e2530">Y</div>
<div class="abs" style="left:1295px;top:540.500px;width:16px;height:13px;line-height:13px;text-align:center;font-size:9px;color:#0a6fd6">Z</div>
<svg class="abs" style="left:1283.500px;top:531px" width="8" height="7" viewBox="0 0 11 8"><path d="M0 4 C1.500 1.300 3.400 0 5.500 0 C7.600 0 9.500 1.300 11 4 C9.500 6.700 7.600 8 5.500 8 C3.400 8 1.500 6.700 0 4 Z" fill="#1e2530"/><circle cx="5.500" cy="4" r="2.300" fill="#fff"/><circle cx="5.500" cy="4" r="1.300" fill="#1e2530"/></svg>
<svg class="abs" style="left:1284px;top:556px" width="7" height="7" viewBox="0 0 7 7"><rect x="0.500" y="0.500" width="6" height="6" fill="#fff" stroke="#1e2530" stroke-width="1"/><rect x="0" y="0" width="3.500" height="7" fill="#1e2530"/></svg>
<div class="abs" style="left:1284.500px;top:905.500px;width:27.500px;height:27px;border-radius:50%;background:#fff;border:1px solid #5ea5e8;box-shadow:0 1px 4px rgba(40,50,70,.2)"></div>
<svg class="abs" style="left:1293px;top:912px" width="14" height="13" viewBox="0 0 14 13"><path d="M1.500 1.500 H12.500 V10 H3.500 L1.500 12 Z" fill="none" stroke="#3f8ad6" stroke-width="1"/><path d="M4 8 L8 4" stroke="#0a5fd0" stroke-width="1.600"/><path d="M7.500 8.300 H10.500" stroke="#3f8ad6" stroke-width="1"/></svg>
<div class="abs" style="left:50px;top:853px;width:254px;height:77.500px;border-radius:6px;background:rgba(255,255,255,.72);box-shadow:0 2px 6px rgba(40,50,70,.10)"></div>
<div class="abs" style="left:61px;top:863px;font-weight:bold;font-size:12.300px;line-height:14px;color:#2f3744;letter-spacing:-.25px">Summary</div><svg class="abs" style="left:117.5px;top:864px" width="12" height="12" viewBox="0 0 12 12"><circle cx="6" cy="6" r="5" fill="none" stroke="#5d6776" stroke-width="1"/><rect x="5.450" y="5.200" width="1.100" height="3.400" fill="#5d6776"/><rect x="5.450" y="3.200" width="1.100" height="1.200" fill="#5d6776"/></svg>
<svg class="abs" style="left:260.500px;top:865.500px" width="9" height="9" viewBox="0 0 9 9"><rect x="0.500" y="0.500" width="8" height="8" fill="none" stroke="#4a5260" stroke-width="1"/><rect x="5" y="0.500" width="3.500" height="8" fill="#4a5260"/></svg>
<svg class="abs" style="left:282.500px;top:865.500px" width="9" height="9" viewBox="0 0 9 9"><path d="M5.500 0.800 H8.200 V3.500 M3.500 8.200 H0.800 V5.500" fill="none" stroke="#4a5260" stroke-width="1.200"/></svg>
<svg class="abs" style="left:61.500px;top:889px" width="11" height="11" viewBox="0 0 11 11"><circle cx="5.500" cy="5.500" r="5.500" fill="#4a5260"/><path d="M5.500 2.500 V5.800 L7.800 7" fill="none" stroke="#fff" stroke-width="1"/></svg>
<div class="abs" style="left:80px;top:887.500px;font-size:11px;line-height:14px;color:#4a5260;letter-spacing:-.22px;white-space:nowrap">Time Estimate</div><svg class="abs" style="left:150px;top:888.5px" width="12" height="12" viewBox="0 0 12 12"><circle cx="6" cy="6" r="5" fill="none" stroke="#5d6776" stroke-width="1"/><rect x="5.450" y="5.200" width="1.100" height="3.400" fill="#5d6776"/><rect x="5.450" y="3.200" width="1.100" height="1.200" fill="#5d6776"/></svg>
<div class="abs" style="left:200px;width:77.500px;top:887.500px;font-size:10.500px;line-height:14px;color:#c9ced5;text-align:right;letter-spacing:-.2px">~58 m</div>
<svg class="abs" style="left:281.500px;top:889px" width="11" height="11" viewBox="0 0 11 11"><path d="M9.200 3 A4.500 4.500 0 1 0 10 5.500" fill="none" stroke="#c9ced5" stroke-width="1"/><path d="M10.500 0.500 V3.800 H7.200" fill="none" stroke="#c9ced5" stroke-width="1"/><path d="M5.500 3 V5.800 L7.300 6.800" fill="none" stroke="#c9ced5" stroke-width="1"/></svg>
<svg class="abs" style="left:61px;top:907px" width="12" height="12" viewBox="0 0 12 12"><path d="M0.500 5.500 L6 8.500 L11.500 5.500 L6 2.500 Z" fill="#4a5260"/><path d="M0.500 8 L6 11 L11.500 8" fill="none" stroke="#4a5260" stroke-width="1.200"/><path d="M8.500 0 C9.500 1.300 10.300 2.300 10.300 3.200 A1.800 1.800 0 0 1 6.700 3.200 C6.700 2.300 7.500 1.300 8.500 0 Z" fill="#4a5260" stroke="#fff" stroke-width=".6"/></svg>
<div class="abs" style="left:80px;top:906px;font-size:11px;line-height:14px;color:#4a5260;letter-spacing:-.22px">Volume</div>
<div class="abs" style="left:200px;width:92.500px;top:906px;font-size:10.500px;line-height:14px;color:#333b49;text-align:right;letter-spacing:-.35px">13.77 mL</div>
</div></div>
 <div id="rpanel"><div id="rp">
<div class="abs" style="left:1337px;top:100.500px;width:206.500px;height:209px;background:#f5f7f9;border:1px solid #e4e8ec;border-radius:5px"></div>
<div class="rh" style="left:1349.500px;top:106.500px;font-size:10.600px">Printer</div>
<svg class="abs" style="left:1349px;top:125px" width="18" height="25" viewBox="0 0 18 25"><path d="M2 0 H16 Q18 0 18 2 V14.500 H0 V2 Q0 0 2 0 Z" fill="#6d7785"/><path d="M0 16.500 H18 V23 Q18 25 16 25 H2 Q0 25 0 23 Z" fill="#6d7785"/><rect x="8" y="18.500" width="8.500" height="5" rx="0.800" fill="#fff"/></svg>
<div class="rh" style="left:1378px;top:122.500px;font-size:12.400px;line-height:16px;letter-spacing:-.3px">RussetHare</div>
<div class="abs" style="left:1378px;top:138px;font-size:11px;line-height:14px;color:#7b8594">Form 4B</div>
<div class="rl" style="top:159px">Status</div><div class="rv" style="top:159px">Not ready</div>
<div class="rl" style="top:176px">Connection</div><div class="rv" style="top:176px">Local</div>
<div class="rl" style="top:193px">Cartridge</div><div class="rv" style="top:193px;color:#e0291f">Missing</div><svg class="abs" style="left:1483.500px;top:195.5px" width="9" height="9" viewBox="0 0 9 9"><path d="M4.500 0 L9 4.500 L4.500 9 L0 4.500 Z" fill="#e0291f"/><rect x="4" y="2.300" width="1" height="2.800" fill="#fff"/><rect x="4" y="5.800" width="1" height="1" fill="#fff"/></svg>
<div class="rl" style="top:210px">Tank</div><div class="rv" style="top:210px;color:#e0291f">Missing</div><svg class="abs" style="left:1483.500px;top:212.5px" width="9" height="9" viewBox="0 0 9 9"><path d="M4.500 0 L9 4.500 L4.500 9 L0 4.500 Z" fill="#e0291f"/><rect x="4" y="2.300" width="1" height="2.800" fill="#fff"/><rect x="4" y="5.800" width="1" height="1" fill="#fff"/></svg>
<div class="abs" style="left:1338px;top:232.500px;width:204.500px;height:1px;background:#dfe3e8"></div>
<div class="rh" style="left:1349.500px;top:237px;font-size:10.600px">Job Settings</div>
<div class="rl" style="top:254px">Material</div><div class="rv" style="top:254px">Flexible 80A V1.1</div>
<div class="rl" style="top:271px">Layer Thickness</div><div class="rv" style="top:271px">0.100 mm</div>
<div class="rl" style="top:288px">Print Settings</div><div class="rv" style="top:288px">Default</div>
<div class="abs" style="left:1326px;top:322px;width:231px;height:1px;background:#eceff2"></div>
<div class="rh" style="left:1337px;top:328.500px;font-size:12.300px">Print Validation</div>
<div class="abs" style="left:1537.500px;top:334px;width:0;height:0;border-top:3.500px solid #1e2530;border-left:3px solid transparent;border-right:3px solid transparent"></div>
<div class="rl" style="left:1337px;top:351px">Undersupported Models</div><div class="tg" style="top:353px"></div>
<div class="rl" style="left:1337px;top:371px">Minima</div><div class="tg" style="top:373px"></div>
<div class="rl" style="left:1337px;top:391px">Cups</div><div class="tg" style="top:393px"></div>
<div class="abs" style="left:1326px;top:414.500px;width:231px;height:18.500px;border-top:1px solid #eceff2;border-bottom:1px solid #eceff2;border-left:2px solid #f39a2b;background:#fff"></div>
<svg class="abs" style="left:1336.500px;top:417.500px" width="12" height="11" viewBox="0 0 12 11"><path d="M6 0.300 L11.800 10.700 H0.200 Z" fill="#f39a2b"/><rect x="5.400" y="3.800" width="1.200" height="3.600" fill="#fff"/><rect x="5.400" y="8.200" width="1.200" height="1.200" fill="#fff"/></svg>
<div class="abs" style="left:1354.500px;top:416.500px;font-size:11px;line-height:14px;color:#4a5260;white-space:nowrap;letter-spacing:-.2px">Some Print Validations Are Disabled</div>
<div class="abs" style="left:1538.500px;top:420.500px;width:0;height:0;border-left:3.500px solid #1e2530;border-top:3px solid transparent;border-bottom:3px solid transparent"></div>
<div class="rh" style="left:1337px;top:441.500px;font-size:12.300px">Model List (2)</div>
<div class="abs" style="left:1537.500px;top:447px;width:0;height:0;border-top:3.500px solid #1e2530;border-left:3px solid transparent;border-right:3px solid transparent"></div>
<div class="abs" style="left:1326px;top:464px;width:231px;height:20px;background:#dfeaf7;border-left:2px solid #3f8ad6"></div>
<div class="abs" style="left:1337px;top:467px;font-size:11px;line-height:14px;color:#333b49;white-space:nowrap;letter-spacing:-.3px">7 - (GP) Gingiva Mask 16</div><svg class="abs" style="left:1532.500px;top:470px" width="11" height="8" viewBox="0 0 11 8"><path d="M0 4 C1.500 1.300 3.400 0 5.500 0 C7.600 0 9.500 1.300 11 4 C9.500 6.700 7.600 8 5.500 8 C3.400 8 1.500 6.700 0 4 Z" fill="#1e2530"/><circle cx="5.500" cy="4" r="2.300" fill="#fff"/><circle cx="5.500" cy="4" r="1.300" fill="#1e2530"/></svg><svg class="abs" style="left:1514.500px;top:469.5px" width="7" height="9" viewBox="0 0 7 9"><path d="M1 0.500 L3.200 3 V8 M0.500 8.500 H6.500" fill="none" stroke="#c3c8cf" stroke-width="1"/></svg>
<div class="abs" style="left:1337px;top:487px;font-size:11px;line-height:14px;color:#333b49;white-space:nowrap;letter-spacing:-.3px">MA_GINGIVA</div><svg class="abs" style="left:1532.500px;top:490px" width="11" height="8" viewBox="0 0 11 8"><path d="M0 4 C1.500 1.300 3.400 0 5.500 0 C7.600 0 9.500 1.300 11 4 C9.500 6.700 7.600 8 5.500 8 C3.400 8 1.500 6.700 0 4 Z" fill="#1e2530"/><circle cx="5.500" cy="4" r="2.300" fill="#fff"/><circle cx="5.500" cy="4" r="1.300" fill="#1e2530"/></svg><svg class="abs" style="left:1514.500px;top:489.5px" width="7" height="9" viewBox="0 0 7 9"><path d="M1 0.500 L3.200 3 V8 M0.500 8.500 H6.500" fill="none" stroke="#c3c8cf" stroke-width="1"/></svg>
<div class="abs" style="left:1337px;top:906.500px;width:207px;height:24.500px;border-radius:12.500px;background:#ff6600"></div>
<svg class="abs" style="left:1391.500px;top:914px" width="11" height="10" viewBox="0 0 11 10"><path d="M0 0.500 H9.500 V2 H0 Z M0 4 H9.500 V5.500 H0 Z M0 7.500 H6 V9 H0 Z" fill="#fff"/><path d="M8.500 6.800 V10 L11 8.400 Z" fill="#fff"/></svg>
<div class="abs" style="left:1408px;top:911.500px;font-size:10.800px;line-height:14px;color:#fff;white-space:nowrap;letter-spacing:-.1px">Upload to Queue</div>
</div></div>
</div>
</body>
</html>
